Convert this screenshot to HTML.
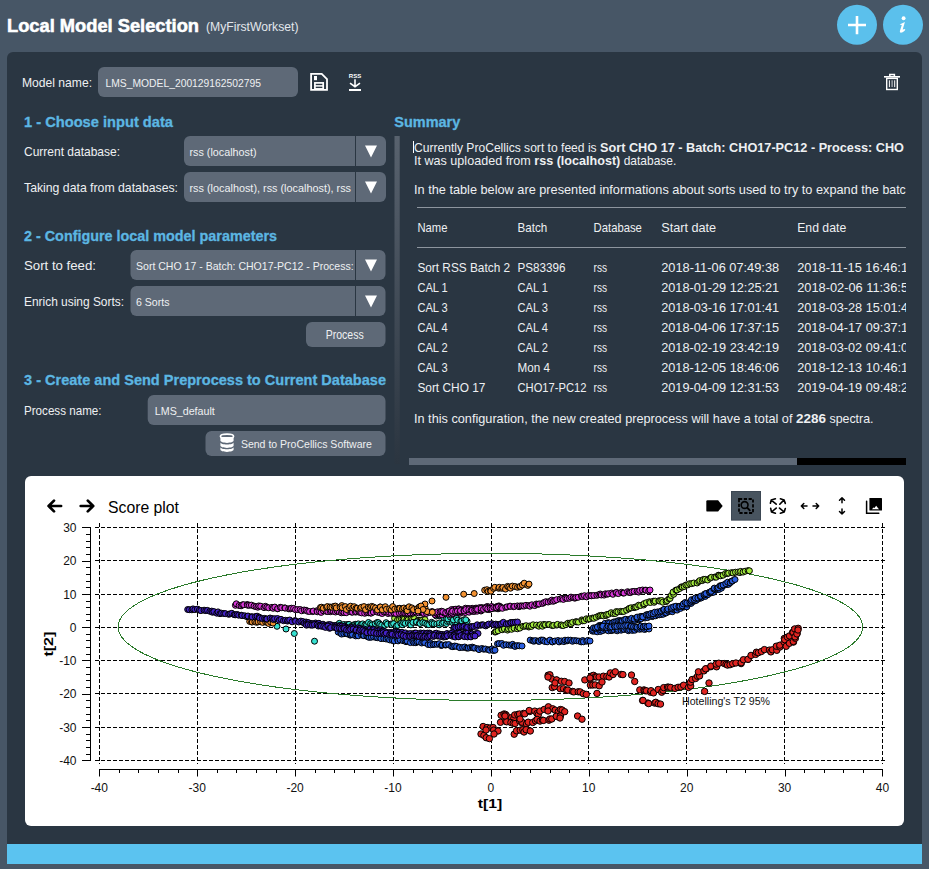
<!DOCTYPE html>
<html><head><meta charset="utf-8">
<style>
html,body{margin:0;padding:0;background:#475666;width:929px;height:869px;overflow:hidden}
svg{display:block}
text{font-family:"Liberation Sans",sans-serif;white-space:pre}
</style></head>
<body>
<svg width="929" height="869" viewBox="0 0 929 869">
<defs>
<linearGradient id="sb" x1="0" y1="0" x2="0" y2="1">
<stop offset="0" stop-color="#58626e"/><stop offset="1" stop-color="#2b3540"/>
</linearGradient>
<clipPath id="sumclip"><rect x="400" y="130" width="506" height="330"/></clipPath>
<clipPath id="dd1"><rect x="184" y="136" width="171" height="66"/></clipPath>
<clipPath id="dd2"><rect x="130" y="250" width="225" height="66"/></clipPath>
<clipPath id="plotclip"><rect x="25" y="476" width="879" height="350" rx="6"/></clipPath>
</defs>

<text x="7" y="31.7" font-size="18.5" fill="#fff" font-weight="bold" textLength="192" lengthAdjust="spacingAndGlyphs" stroke="#fff" stroke-width="0.55">Local Model Selection</text>
<text x="206" y="30.5" font-size="12.5" fill="#e3e7ec" textLength="92.5" lengthAdjust="spacingAndGlyphs">(MyFirstWorkset)</text>
<circle cx="857" cy="24.8" r="20" fill="#5bc0ec"/>
<circle cx="903" cy="24.8" r="20" fill="#5bc0ec"/>
<path d="M857 16v18.2M848 25h18" stroke="#fff" stroke-width="2.6"/>
<circle cx="903.6" cy="18.3" r="1.95" fill="#fff"/>
<path d="M899.6 24.4L904.9 21.9L902.7 29.4L905.3 29L904.7 30.7Q902.2 32.9 900.7 32.7Q899.5 32.4 899.9 31L901.8 25z" fill="#fff"/>
<rect x="7" y="52" width="915" height="800" rx="6" fill="#2a3642"/>
<rect x="7" y="844" width="915" height="20" fill="#5bc3f0"/>
<text x="22" y="87.3" font-size="13" fill="#eef0f2" textLength="70" lengthAdjust="spacingAndGlyphs">Model name:</text>
<rect x="98" y="67" width="200" height="30" rx="6" fill="#5e6977"/>
<text x="105.5" y="87.2" font-size="11.3" fill="#eef0f2" textLength="155.5" lengthAdjust="spacingAndGlyphs">LMS_MODEL_200129162502795</text>
<path d="M311.1 73.9h10.6l5.3 5.3v10.7h-15.9z" fill="none" stroke="#fff" stroke-width="1.8" stroke-linejoin="miter"/>
<rect x="314" y="76" width="3" height="4.2" fill="#fff"/>
<rect x="314.9" y="82.9" width="8.3" height="6" fill="none" stroke="#fff" stroke-width="1.7"/>
<path d="M314.9 85.9h8.3" stroke="#fff" stroke-width="1.5"/>
<text x="355" y="78" font-size="6" font-weight="bold" fill="#fff" text-anchor="middle" textLength="12.4" lengthAdjust="spacingAndGlyphs">RSS</text>
<path d="M355 79.2v7M350 83.1l5 3.6 5-3.6" fill="none" stroke="#fff" stroke-width="1.6"/>
<rect x="349" y="89" width="12" height="2" fill="#fff"/>
<rect x="884" y="76" width="16" height="1.6" fill="#fff"/>
<path d="M889.8 76v-1.5h4.6v1.5" fill="none" stroke="#fff" stroke-width="1.5"/>
<rect x="886.7" y="78.4" width="10.6" height="11.1" fill="none" stroke="#fff" stroke-width="1.4"/>
<path d="M889.4 80.3v6.8M894.7 80.3v6.8" stroke="#fff" stroke-width="1"/><path d="M892.1 80.3v6.8" stroke="#b8bcc2" stroke-width="1.2"/>
<text x="24" y="126.9" font-size="14.8" fill="#5cb6e2" font-weight="bold" textLength="149" lengthAdjust="spacingAndGlyphs" stroke="#5cb6e2" stroke-width="0.3">1 - Choose input data</text>
<text x="24" y="156" font-size="13" fill="#eef0f2" textLength="96" lengthAdjust="spacingAndGlyphs">Current database:</text>
<text x="24" y="192" font-size="13" fill="#eef0f2" textLength="154" lengthAdjust="spacingAndGlyphs">Taking data from databases:</text>
<rect x="184" y="136" width="202" height="30" rx="6" fill="#5e6977"/>
<rect x="184" y="172" width="202" height="30" rx="6" fill="#5e6977"/>
<path d="M355.5 136v30M355.5 172v30" stroke="#2a3642" stroke-width="1"/>
<text x="189.5" y="156" font-size="11.6" fill="#eef0f2" textLength="67" lengthAdjust="spacingAndGlyphs">rss (localhost)</text>
<g clip-path="url(#dd1)">
<text x="189.5" y="192" font-size="11.6" fill="#eef0f2" textLength="161.5" lengthAdjust="spacingAndGlyphs">rss (localhost), rss (localhost), rss</text>
</g>
<path d="M365 145.5h12l-6 12z" fill="#fff"/>
<path d="M365 181.5h12l-6 12z" fill="#fff"/>
<text x="24" y="241" font-size="14.8" fill="#5cb6e2" font-weight="bold" textLength="253" lengthAdjust="spacingAndGlyphs" stroke="#5cb6e2" stroke-width="0.3">2 - Configure local model parameters</text>
<text x="24" y="269.5" font-size="13" fill="#eef0f2" textLength="72" lengthAdjust="spacingAndGlyphs">Sort to feed:</text>
<text x="24" y="306" font-size="13" fill="#eef0f2" textLength="100" lengthAdjust="spacingAndGlyphs">Enrich using Sorts:</text>
<rect x="130.5" y="250" width="255" height="30" rx="6" fill="#5e6977"/>
<rect x="130.5" y="286" width="255" height="30" rx="6" fill="#5e6977"/>
<path d="M355.5 250v30M355.5 286v30" stroke="#2a3642" stroke-width="1"/>
<g clip-path="url(#dd2)">
<text x="136" y="269.5" font-size="11.6" fill="#eef0f2" textLength="244" lengthAdjust="spacingAndGlyphs">Sort CHO 17 - Batch: CHO17-PC12 - Process: CHO</text>
</g>
<text x="136" y="306" font-size="11.6" fill="#eef0f2" textLength="33.5" lengthAdjust="spacingAndGlyphs">6 Sorts</text>
<path d="M365 259.5h12l-6 12z" fill="#fff"/>
<path d="M365 295.5h12l-6 12z" fill="#fff"/>
<rect x="306" y="322" width="79.5" height="25" rx="6" fill="#5e6977"/>
<text x="325.7" y="339.2" font-size="12.2" fill="#eef0f2" textLength="38" lengthAdjust="spacingAndGlyphs">Process</text>
<text x="24" y="385.2" font-size="14.8" fill="#5cb6e2" font-weight="bold" textLength="362" lengthAdjust="spacingAndGlyphs" stroke="#5cb6e2" stroke-width="0.3">3 - Create and Send Preprocess to Current Database</text>
<text x="24" y="414.6" font-size="13" fill="#eef0f2" textLength="77.5" lengthAdjust="spacingAndGlyphs">Process name:</text>
<rect x="147.7" y="395" width="237.8" height="30" rx="6" fill="#5e6977"/>
<text x="154.8" y="414.6" font-size="11.6" fill="#eef0f2" textLength="60" lengthAdjust="spacingAndGlyphs">LMS_default</text>
<rect x="205.5" y="431" width="180" height="25" rx="6" fill="#5e6977"/>
<ellipse cx="227" cy="436.3" rx="6.6" ry="2.2" fill="none" stroke="#fff" stroke-width="1.6"/>
<path d="M220.4 437v3.6c0 1.3 3 2.3 6.6 2.3s6.6-1 6.6-2.3V437" fill="#fff"/>
<path d="M220.4 442.2v3.4c0 1.3 3 2.3 6.6 2.3s6.6-1 6.6-2.3v-3.4c0 1.3-3 2.3-6.6 2.3s-6.6-1-6.6-2.3z" fill="#fff"/>
<path d="M220.4 447v2.6c0 1.3 3 2.3 6.6 2.3s6.6-1 6.6-2.3V447c0 1.3-3 2.3-6.6 2.3s-6.6-1-6.6-2.3z" fill="#fff"/>
<text x="240.9" y="447.8" font-size="11.6" fill="#eef0f2" textLength="131" lengthAdjust="spacingAndGlyphs">Send to ProCellics Software</text>
<text x="394.3" y="127.4" font-size="14.8" fill="#5cb6e2" font-weight="bold" textLength="66" lengthAdjust="spacingAndGlyphs" stroke="#5cb6e2" stroke-width="0.3">Summary</text>
<rect x="394.5" y="136" width="5.2" height="328" fill="url(#sb)"/>
<path d="M413.5 141v12" stroke="#fff" stroke-width="1"/>
<g clip-path="url(#sumclip)">
<text x="414" y="152" font-size="12.8" fill="#eef0f2" textLength="186" lengthAdjust="spacingAndGlyphs">Currently ProCellics sort to feed is </text>
<text x="600" y="152" font-size="12.8" fill="#eef0f2" font-weight="bold" textLength="304" lengthAdjust="spacingAndGlyphs">Sort CHO 17 - Batch: CHO17-PC12 - Process: CHO</text>
<text x="904" y="152" font-size="12.8" fill="#eef0f2" font-weight="bold"> 17</text>
<text x="414" y="165.3" font-size="12.8" fill="#eef0f2" textLength="120.3" lengthAdjust="spacingAndGlyphs">It was uploaded from </text>
<text x="534.3" y="165.3" font-size="12.8" fill="#eef0f2" font-weight="bold" textLength="86" lengthAdjust="spacingAndGlyphs">rss (localhost)</text>
<text x="620.3" y="165.3" font-size="12.8" fill="#eef0f2" textLength="56" lengthAdjust="spacingAndGlyphs"> database.</text>
<text x="414" y="193.5" font-size="12.8" fill="#eef0f2" textLength="468.5" lengthAdjust="spacingAndGlyphs">In the table below are presented informations about sorts used to try to expand the </text>
<text x="882.5" y="193.5" font-size="12.8" fill="#eef0f2" textLength="30" lengthAdjust="spacingAndGlyphs">batch</text>
<path d="M417 207.5h489M417 247.5h489" stroke="#8d959e" stroke-width="1"/>
<text x="417.4" y="231.8" font-size="12.8" fill="#eef0f2" textLength="30" lengthAdjust="spacingAndGlyphs">Name</text>
<text x="517.5" y="231.8" font-size="12.8" fill="#eef0f2" textLength="29.7" lengthAdjust="spacingAndGlyphs">Batch</text>
<text x="593.6" y="231.8" font-size="12.8" fill="#eef0f2" textLength="48.3" lengthAdjust="spacingAndGlyphs">Database</text>
<text x="661.2" y="231.8" font-size="12.8" fill="#eef0f2" textLength="55" lengthAdjust="spacingAndGlyphs">Start date</text>
<text x="797.2" y="231.8" font-size="12.8" fill="#eef0f2" textLength="49" lengthAdjust="spacingAndGlyphs">End date</text>
<text x="417.4" y="271.7" font-size="12.8" fill="#eef0f2" textLength="92.7" lengthAdjust="spacingAndGlyphs">Sort RSS Batch 2</text>
<text x="517.5" y="271.7" font-size="12.8" fill="#eef0f2" textLength="48" lengthAdjust="spacingAndGlyphs">PS83396</text>
<text x="593.6" y="271.7" font-size="12.8" fill="#eef0f2" textLength="13.5" lengthAdjust="spacingAndGlyphs">rss</text>
<text x="661.2" y="271.7" font-size="12.8" fill="#eef0f2" textLength="118" lengthAdjust="spacingAndGlyphs">2018-11-06 07:49:38</text>
<text x="797.2" y="271.7" font-size="12.8" fill="#eef0f2" textLength="118" lengthAdjust="spacingAndGlyphs">2018-11-15 16:46:10</text>
<text x="417.4" y="291.7" font-size="12.8" fill="#eef0f2" textLength="30.4" lengthAdjust="spacingAndGlyphs">CAL 1</text>
<text x="517.5" y="291.7" font-size="12.8" fill="#eef0f2" textLength="30.4" lengthAdjust="spacingAndGlyphs">CAL 1</text>
<text x="593.6" y="291.7" font-size="12.8" fill="#eef0f2" textLength="13.5" lengthAdjust="spacingAndGlyphs">rss</text>
<text x="661.2" y="291.7" font-size="12.8" fill="#eef0f2" textLength="118" lengthAdjust="spacingAndGlyphs">2018-01-29 12:25:21</text>
<text x="797.2" y="291.7" font-size="12.8" fill="#eef0f2" textLength="118" lengthAdjust="spacingAndGlyphs">2018-02-06 11:36:55</text>
<text x="417.4" y="311.7" font-size="12.8" fill="#eef0f2" textLength="30.4" lengthAdjust="spacingAndGlyphs">CAL 3</text>
<text x="517.5" y="311.7" font-size="12.8" fill="#eef0f2" textLength="30.4" lengthAdjust="spacingAndGlyphs">CAL 3</text>
<text x="593.6" y="311.7" font-size="12.8" fill="#eef0f2" textLength="13.5" lengthAdjust="spacingAndGlyphs">rss</text>
<text x="661.2" y="311.7" font-size="12.8" fill="#eef0f2" textLength="118" lengthAdjust="spacingAndGlyphs">2018-03-16 17:01:41</text>
<text x="797.2" y="311.7" font-size="12.8" fill="#eef0f2" textLength="118" lengthAdjust="spacingAndGlyphs">2018-03-28 15:01:41</text>
<text x="417.4" y="331.7" font-size="12.8" fill="#eef0f2" textLength="30.4" lengthAdjust="spacingAndGlyphs">CAL 4</text>
<text x="517.5" y="331.7" font-size="12.8" fill="#eef0f2" textLength="30.4" lengthAdjust="spacingAndGlyphs">CAL 4</text>
<text x="593.6" y="331.7" font-size="12.8" fill="#eef0f2" textLength="13.5" lengthAdjust="spacingAndGlyphs">rss</text>
<text x="661.2" y="331.7" font-size="12.8" fill="#eef0f2" textLength="118" lengthAdjust="spacingAndGlyphs">2018-04-06 17:37:15</text>
<text x="797.2" y="331.7" font-size="12.8" fill="#eef0f2" textLength="118" lengthAdjust="spacingAndGlyphs">2018-04-17 09:37:15</text>
<text x="417.4" y="351.7" font-size="12.8" fill="#eef0f2" textLength="30.4" lengthAdjust="spacingAndGlyphs">CAL 2</text>
<text x="517.5" y="351.7" font-size="12.8" fill="#eef0f2" textLength="30.4" lengthAdjust="spacingAndGlyphs">CAL 2</text>
<text x="593.6" y="351.7" font-size="12.8" fill="#eef0f2" textLength="13.5" lengthAdjust="spacingAndGlyphs">rss</text>
<text x="661.2" y="351.7" font-size="12.8" fill="#eef0f2" textLength="118" lengthAdjust="spacingAndGlyphs">2018-02-19 23:42:19</text>
<text x="797.2" y="351.7" font-size="12.8" fill="#eef0f2" textLength="118" lengthAdjust="spacingAndGlyphs">2018-03-02 09:41:00</text>
<text x="417.4" y="371.7" font-size="12.8" fill="#eef0f2" textLength="30.4" lengthAdjust="spacingAndGlyphs">CAL 3</text>
<text x="517.5" y="371.7" font-size="12.8" fill="#eef0f2" textLength="32.4" lengthAdjust="spacingAndGlyphs">Mon 4</text>
<text x="593.6" y="371.7" font-size="12.8" fill="#eef0f2" textLength="13.5" lengthAdjust="spacingAndGlyphs">rss</text>
<text x="661.2" y="371.7" font-size="12.8" fill="#eef0f2" textLength="118" lengthAdjust="spacingAndGlyphs">2018-12-05 18:46:06</text>
<text x="797.2" y="371.7" font-size="12.8" fill="#eef0f2" textLength="118" lengthAdjust="spacingAndGlyphs">2018-12-13 10:46:15</text>
<text x="417.4" y="391.7" font-size="12.8" fill="#eef0f2" textLength="68" lengthAdjust="spacingAndGlyphs">Sort CHO 17</text>
<text x="517.5" y="391.7" font-size="12.8" fill="#eef0f2" textLength="69" lengthAdjust="spacingAndGlyphs">CHO17-PC12</text>
<text x="593.6" y="391.7" font-size="12.8" fill="#eef0f2" textLength="13.5" lengthAdjust="spacingAndGlyphs">rss</text>
<text x="661.2" y="391.7" font-size="12.8" fill="#eef0f2" textLength="118" lengthAdjust="spacingAndGlyphs">2019-04-09 12:31:53</text>
<text x="797.2" y="391.7" font-size="12.8" fill="#eef0f2" textLength="118" lengthAdjust="spacingAndGlyphs">2019-04-19 09:48:22</text>
<text x="414" y="422.7" font-size="12.8" fill="#eef0f2" textLength="382" lengthAdjust="spacingAndGlyphs">In this configuration, the new created preprocess will have a total of </text>
<text x="796" y="422.7" font-size="12.8" fill="#eef0f2" font-weight="bold" textLength="30" lengthAdjust="spacingAndGlyphs">2286</text>
<text x="826" y="422.7" font-size="12.8" fill="#eef0f2" textLength="47.5" lengthAdjust="spacingAndGlyphs"> spectra.</text>
</g>
<rect x="409" y="458" width="388" height="7" fill="#5e6977"/>
<rect x="797" y="458" width="109" height="7" fill="#000"/>
<rect x="25" y="476" width="879" height="350" rx="6" fill="#fff"/>
<line x1="99.5" y1="523" x2="99.5" y2="764" stroke="#000" stroke-width="1" stroke-dasharray="4 2" shape-rendering="crispEdges"/>
<line x1="197.5" y1="523" x2="197.5" y2="764" stroke="#000" stroke-width="1" stroke-dasharray="4 2" shape-rendering="crispEdges"/>
<line x1="295.5" y1="523" x2="295.5" y2="764" stroke="#000" stroke-width="1" stroke-dasharray="4 2" shape-rendering="crispEdges"/>
<line x1="393.5" y1="523" x2="393.5" y2="764" stroke="#000" stroke-width="1" stroke-dasharray="4 2" shape-rendering="crispEdges"/>
<line x1="491.5" y1="523" x2="491.5" y2="764" stroke="#000" stroke-width="1" stroke-dasharray="4 2" shape-rendering="crispEdges"/>
<line x1="588.5" y1="523" x2="588.5" y2="764" stroke="#000" stroke-width="1" stroke-dasharray="4 2" shape-rendering="crispEdges"/>
<line x1="686.5" y1="523" x2="686.5" y2="764" stroke="#000" stroke-width="1" stroke-dasharray="4 2" shape-rendering="crispEdges"/>
<line x1="784.5" y1="523" x2="784.5" y2="764" stroke="#000" stroke-width="1" stroke-dasharray="4 2" shape-rendering="crispEdges"/>
<line x1="882.5" y1="523" x2="882.5" y2="764" stroke="#000" stroke-width="1" stroke-dasharray="4 2" shape-rendering="crispEdges"/>
<line x1="95" y1="527.5" x2="886" y2="527.5" stroke="#000" stroke-width="1" stroke-dasharray="4 2" shape-rendering="crispEdges"/>
<line x1="95" y1="560.5" x2="886" y2="560.5" stroke="#000" stroke-width="1" stroke-dasharray="4 2" shape-rendering="crispEdges"/>
<line x1="95" y1="594.5" x2="886" y2="594.5" stroke="#000" stroke-width="1" stroke-dasharray="4 2" shape-rendering="crispEdges"/>
<line x1="95" y1="627.5" x2="886" y2="627.5" stroke="#000" stroke-width="1" stroke-dasharray="4 2" shape-rendering="crispEdges"/>
<line x1="95" y1="660.5" x2="886" y2="660.5" stroke="#000" stroke-width="1" stroke-dasharray="4 2" shape-rendering="crispEdges"/>
<line x1="95" y1="693.5" x2="886" y2="693.5" stroke="#000" stroke-width="1" stroke-dasharray="4 2" shape-rendering="crispEdges"/>
<line x1="95" y1="727.5" x2="886" y2="727.5" stroke="#000" stroke-width="1" stroke-dasharray="4 2" shape-rendering="crispEdges"/>
<line x1="95" y1="760.5" x2="886" y2="760.5" stroke="#000" stroke-width="1" stroke-dasharray="4 2" shape-rendering="crispEdges"/>
<g stroke="#000" stroke-width="1">
<line x1="90.5" y1="527" x2="90.5" y2="761"/>
<line x1="99" y1="769.5" x2="883" y2="769.5"/>
<path d="M82 527.5h8.5M86 534.5h4.5M86 541.5h4.5M86 547.5h4.5M86 554.5h4.5M82 561.5h8.5M86 567.5h4.5M86 574.5h4.5M86 581.5h4.5M86 587.5h4.5M82 594.5h8.5M86 601.5h4.5M86 607.5h4.5M86 614.5h4.5M86 620.5h4.5M82 627.5h8.5M86 634.5h4.5M86 640.5h4.5M86 647.5h4.5M86 654.5h4.5M82 660.5h8.5M86 667.5h4.5M86 674.5h4.5M86 680.5h4.5M86 687.5h4.5M82 694.5h8.5M86 700.5h4.5M86 707.5h4.5M86 714.5h4.5M86 720.5h4.5M82 727.5h8.5M86 734.5h4.5M86 740.5h4.5M86 747.5h4.5M86 754.5h4.5M82 760.5h8.5M99.5 769v7.5M119.5 769v4M138.5 769v4M158.5 769v4M178.5 769v4M197.5 769v7.5M217.5 769v4M236.5 769v4M256.5 769v4M276.5 769v4M295.5 769v7.5M315.5 769v4M334.5 769v4M354.5 769v4M373.5 769v4M393.5 769v7.5M413.5 769v4M432.5 769v4M452.5 769v4M471.5 769v4M491.5 769v7.5M510.5 769v4M530.5 769v4M550.5 769v4M569.5 769v4M589.5 769v7.5M608.5 769v4M628.5 769v4M648.5 769v4M667.5 769v4M687.5 769v7.5M706.5 769v4M726.5 769v4M745.5 769v4M765.5 769v4M785.5 769v7.5M804.5 769v4M824.5 769v4M843.5 769v4M863.5 769v4M882.5 769v7.5" fill="none"/>
</g>
<text x="76.5" y="531.9" font-size="12" text-anchor="end" fill="#111">30</text>
<text x="76.5" y="565.2" font-size="12" text-anchor="end" fill="#111">20</text>
<text x="76.5" y="598.5" font-size="12" text-anchor="end" fill="#111">10</text>
<text x="76.5" y="631.8" font-size="12" text-anchor="end" fill="#111">0</text>
<text x="76.5" y="665.1" font-size="12" text-anchor="end" fill="#111">-10</text>
<text x="76.5" y="698.4" font-size="12" text-anchor="end" fill="#111">-20</text>
<text x="76.5" y="731.6" font-size="12" text-anchor="end" fill="#111">-30</text>
<text x="76.5" y="764.9" font-size="12" text-anchor="end" fill="#111">-40</text>
<text x="99.3" y="792" font-size="12" text-anchor="middle" fill="#111">-40</text>
<text x="197.2" y="792" font-size="12" text-anchor="middle" fill="#111">-30</text>
<text x="295.1" y="792" font-size="12" text-anchor="middle" fill="#111">-20</text>
<text x="393.0" y="792" font-size="12" text-anchor="middle" fill="#111">-10</text>
<text x="490.9" y="792" font-size="12" text-anchor="middle" fill="#111">0</text>
<text x="588.8" y="792" font-size="12" text-anchor="middle" fill="#111">10</text>
<text x="686.7" y="792" font-size="12" text-anchor="middle" fill="#111">20</text>
<text x="784.6" y="792" font-size="12" text-anchor="middle" fill="#111">30</text>
<text x="882.5" y="792" font-size="12" text-anchor="middle" fill="#111">40</text>
<text x="477.7" y="807.8" font-size="13" font-weight="bold" fill="#000" textLength="24.5" lengthAdjust="spacingAndGlyphs">t[1]</text>
<text transform="translate(53 656.6) rotate(-90)" x="0" y="0" font-size="13" font-weight="bold" fill="#000" textLength="25" lengthAdjust="spacingAndGlyphs">t[2]</text>
<ellipse cx="490.4" cy="626.9" rx="372.2" ry="73.6" fill="none" stroke="#2a7a2a" stroke-width="1" shape-rendering="crispEdges"/>
<g fill="#e02420" stroke="#000" stroke-width="1.0">
<circle cx="639.8" cy="689.9" r="3.2"/>
<circle cx="644.0" cy="689.9" r="3.2"/>
<circle cx="645.0" cy="690.7" r="3.2"/>
<circle cx="646.4" cy="690.8" r="3.2"/>
<circle cx="650.5" cy="692.2" r="3.2"/>
<circle cx="651.0" cy="690.7" r="3.2"/>
<circle cx="653.5" cy="692.9" r="3.2"/>
<circle cx="658.2" cy="689.5" r="3.2"/>
<circle cx="661.7" cy="692.2" r="3.2"/>
<circle cx="663.0" cy="690.4" r="3.2"/>
<circle cx="663.7" cy="687.6" r="3.2"/>
<circle cx="667.5" cy="687.1" r="3.2"/>
<circle cx="668.7" cy="687.2" r="3.2"/>
<circle cx="670.6" cy="687.4" r="3.2"/>
<circle cx="675.0" cy="688.4" r="3.2"/>
<circle cx="678.1" cy="687.3" r="3.2"/>
<circle cx="680.9" cy="687.0" r="3.2"/>
<circle cx="683.6" cy="685.2" r="3.2"/>
<circle cx="688.4" cy="687.5" r="3.2"/>
<circle cx="690.7" cy="686.0" r="3.2"/>
<circle cx="690.5" cy="682.2" r="3.2"/>
<circle cx="692.1" cy="679.5" r="3.2"/>
<circle cx="695.6" cy="678.5" r="3.2"/>
<circle cx="697.5" cy="676.3" r="3.2"/>
<circle cx="699.6" cy="675.9" r="3.2"/>
<circle cx="698.4" cy="671.8" r="3.2"/>
<circle cx="703.9" cy="670.9" r="3.2"/>
<circle cx="706.3" cy="668.8" r="3.2"/>
<circle cx="705.6" cy="668.8" r="3.2"/>
<circle cx="710.8" cy="666.7" r="3.2"/>
<circle cx="710.9" cy="666.1" r="3.2"/>
<circle cx="716.6" cy="666.8" r="3.2"/>
<circle cx="716.1" cy="664.1" r="3.2"/>
<circle cx="718.8" cy="663.2" r="3.2"/>
<circle cx="724.1" cy="663.5" r="3.2"/>
<circle cx="726.0" cy="664.3" r="3.2"/>
<circle cx="727.5" cy="665.1" r="3.2"/>
<circle cx="730.0" cy="664.7" r="3.2"/>
<circle cx="732.7" cy="663.7" r="3.2"/>
<circle cx="735.9" cy="663.0" r="3.2"/>
<circle cx="741.1" cy="663.6" r="3.2"/>
<circle cx="741.2" cy="662.7" r="3.2"/>
<circle cx="743.4" cy="659.7" r="3.2"/>
<circle cx="748.2" cy="659.3" r="3.2"/>
<circle cx="748.0" cy="659.3" r="3.2"/>
<circle cx="751.0" cy="655.4" r="3.2"/>
<circle cx="755.6" cy="654.4" r="3.2"/>
<circle cx="756.4" cy="652.2" r="3.2"/>
<circle cx="758.3" cy="652.7" r="3.2"/>
<circle cx="761.4" cy="651.5" r="3.2"/>
<circle cx="764.4" cy="649.6" r="3.2"/>
<circle cx="769.4" cy="650.1" r="3.2"/>
<circle cx="770.9" cy="651.9" r="3.2"/>
<circle cx="772.4" cy="649.8" r="3.2"/>
<circle cx="776.8" cy="650.3" r="3.2"/>
<circle cx="776.3" cy="646.2" r="3.2"/>
<circle cx="779.9" cy="647.0" r="3.2"/>
<circle cx="779.8" cy="645.2" r="3.2"/>
<circle cx="784.1" cy="642.1" r="3.2"/>
<circle cx="784.3" cy="638.4" r="3.2"/>
<circle cx="784.7" cy="639.7" r="3.2"/>
<circle cx="787.4" cy="637.1" r="3.2"/>
<circle cx="789.5" cy="635.9" r="3.2"/>
<circle cx="792.6" cy="632.4" r="3.2"/>
<circle cx="793.1" cy="632.3" r="3.2"/>
<circle cx="794.7" cy="628.9" r="3.2"/>
<circle cx="798.2" cy="628.3" r="3.2"/>
<circle cx="786.2" cy="646.3" r="3.2"/>
<circle cx="789.4" cy="643.3" r="3.2"/>
<circle cx="793.5" cy="642.1" r="3.2"/>
<circle cx="793.3" cy="641.5" r="3.2"/>
<circle cx="795.4" cy="638.3" r="3.2"/>
<circle cx="795.0" cy="636.9" r="3.2"/>
<circle cx="797.1" cy="633.6" r="3.2"/>
<circle cx="796.9" cy="633.9" r="3.2"/>
<circle cx="798.0" cy="630.0" r="3.2"/>
<circle cx="548.1" cy="675.2" r="3.2"/>
<circle cx="549.5" cy="675.9" r="3.2"/>
<circle cx="549.9" cy="674.8" r="3.2"/>
<circle cx="551.8" cy="679.0" r="3.2"/>
<circle cx="556.6" cy="680.1" r="3.2"/>
<circle cx="556.6" cy="679.9" r="3.2"/>
<circle cx="561.4" cy="681.3" r="3.2"/>
<circle cx="564.7" cy="681.5" r="3.2"/>
<circle cx="552.2" cy="687.6" r="3.2"/>
<circle cx="554.6" cy="686.7" r="3.2"/>
<circle cx="560.2" cy="688.7" r="3.2"/>
<circle cx="563.5" cy="688.7" r="3.2"/>
<circle cx="566.5" cy="690.2" r="3.2"/>
<circle cx="567.8" cy="690.1" r="3.2"/>
<circle cx="572.6" cy="691.4" r="3.2"/>
<circle cx="573.8" cy="691.9" r="3.2"/>
<circle cx="578.2" cy="691.8" r="3.2"/>
<circle cx="580.2" cy="691.9" r="3.2"/>
<circle cx="583.3" cy="693.7" r="3.2"/>
<circle cx="586.3" cy="694.4" r="3.2"/>
<circle cx="584.8" cy="679.9" r="3.2"/>
<circle cx="590.2" cy="679.3" r="3.2"/>
<circle cx="591.4" cy="676.1" r="3.2"/>
<circle cx="593.5" cy="675.3" r="3.2"/>
<circle cx="595.2" cy="676.8" r="3.2"/>
<circle cx="596.6" cy="677.0" r="3.2"/>
<circle cx="599.1" cy="677.0" r="3.2"/>
<circle cx="603.4" cy="676.2" r="3.2"/>
<circle cx="606.8" cy="676.4" r="3.2"/>
<circle cx="609.1" cy="677.0" r="3.2"/>
<circle cx="610.4" cy="672.9" r="3.2"/>
<circle cx="613.1" cy="674.5" r="3.2"/>
<circle cx="615.3" cy="671.8" r="3.2"/>
<circle cx="621.1" cy="674.4" r="3.2"/>
<circle cx="622.9" cy="674.6" r="3.2"/>
<circle cx="590.4" cy="685.1" r="3.2"/>
<circle cx="592.8" cy="685.0" r="3.2"/>
<circle cx="595.2" cy="684.9" r="3.2"/>
<circle cx="599.2" cy="685.8" r="3.2"/>
<circle cx="501.1" cy="715.3" r="3.2"/>
<circle cx="504.0" cy="714.0" r="3.2"/>
<circle cx="505.5" cy="714.4" r="3.2"/>
<circle cx="506.5" cy="715.7" r="3.2"/>
<circle cx="511.6" cy="717.6" r="3.2"/>
<circle cx="513.8" cy="718.6" r="3.2"/>
<circle cx="514.7" cy="714.9" r="3.2"/>
<circle cx="517.8" cy="714.4" r="3.2"/>
<circle cx="519.5" cy="714.0" r="3.2"/>
<circle cx="523.5" cy="713.4" r="3.2"/>
<circle cx="524.8" cy="713.8" r="3.2"/>
<circle cx="529.7" cy="711.5" r="3.2"/>
<circle cx="529.2" cy="710.5" r="3.2"/>
<circle cx="534.8" cy="711.1" r="3.2"/>
<circle cx="537.0" cy="713.5" r="3.2"/>
<circle cx="538.3" cy="714.8" r="3.2"/>
<circle cx="539.9" cy="711.1" r="3.2"/>
<circle cx="544.2" cy="709.4" r="3.2"/>
<circle cx="548.2" cy="708.8" r="3.2"/>
<circle cx="548.4" cy="706.8" r="3.2"/>
<circle cx="552.7" cy="708.8" r="3.2"/>
<circle cx="555.2" cy="710.1" r="3.2"/>
<circle cx="558.3" cy="711.7" r="3.2"/>
<circle cx="560.4" cy="709.5" r="3.2"/>
<circle cx="562.1" cy="710.0" r="3.2"/>
<circle cx="564.7" cy="711.7" r="3.2"/>
<circle cx="500.5" cy="722.3" r="3.2"/>
<circle cx="505.7" cy="721.2" r="3.2"/>
<circle cx="506.7" cy="721.8" r="3.2"/>
<circle cx="510.9" cy="722.5" r="3.2"/>
<circle cx="513.2" cy="723.3" r="3.2"/>
<circle cx="515.1" cy="723.5" r="3.2"/>
<circle cx="519.6" cy="720.9" r="3.2"/>
<circle cx="522.3" cy="723.2" r="3.2"/>
<circle cx="522.0" cy="722.2" r="3.2"/>
<circle cx="526.5" cy="723.9" r="3.2"/>
<circle cx="528.2" cy="722.2" r="3.2"/>
<circle cx="532.7" cy="722.5" r="3.2"/>
<circle cx="535.5" cy="720.8" r="3.2"/>
<circle cx="537.1" cy="719.4" r="3.2"/>
<circle cx="540.0" cy="721.1" r="3.2"/>
<circle cx="542.4" cy="720.2" r="3.2"/>
<circle cx="543.5" cy="720.4" r="3.2"/>
<circle cx="548.9" cy="720.2" r="3.2"/>
<circle cx="549.9" cy="719.0" r="3.2"/>
<circle cx="551.8" cy="719.0" r="3.2"/>
<circle cx="556.4" cy="716.4" r="3.2"/>
<circle cx="556.3" cy="716.3" r="3.2"/>
<circle cx="560.4" cy="716.0" r="3.2"/>
<circle cx="514.2" cy="734.2" r="3.2"/>
<circle cx="516.5" cy="730.8" r="3.2"/>
<circle cx="520.2" cy="730.2" r="3.2"/>
<circle cx="522.8" cy="729.8" r="3.2"/>
<circle cx="524.0" cy="732.0" r="3.2"/>
<circle cx="526.1" cy="729.7" r="3.2"/>
<circle cx="530.3" cy="731.0" r="3.2"/>
<circle cx="483.1" cy="726.5" r="3.2"/>
<circle cx="487.1" cy="727.5" r="3.2"/>
<circle cx="490.3" cy="727.9" r="3.2"/>
<circle cx="493.1" cy="727.5" r="3.2"/>
<circle cx="493.7" cy="730.1" r="3.2"/>
<circle cx="498.0" cy="731.0" r="3.2"/>
<circle cx="481.0" cy="734.0" r="3.2"/>
<circle cx="483.9" cy="735.4" r="3.2"/>
<circle cx="486.2" cy="737.7" r="3.2"/>
<circle cx="489.4" cy="738.6" r="3.2"/>
<circle cx="642.6" cy="700.5" r="3.2"/>
<circle cx="647.8" cy="703.0" r="3.2"/>
<circle cx="648.7" cy="703.6" r="3.2"/>
<circle cx="654.7" cy="703.1" r="3.2"/>
<circle cx="655.8" cy="702.3" r="3.2"/>
<circle cx="658.1" cy="703.7" r="3.2"/>
<circle cx="660.5" cy="704.1" r="3.2"/>
<circle cx="631.5" cy="675.0" r="3.2"/>
<circle cx="634.7" cy="681.5" r="3.2"/>
<circle cx="597.0" cy="693.4" r="3.2"/>
<circle cx="577.6" cy="716.0" r="3.2"/>
<circle cx="582.0" cy="719.2" r="3.2"/>
<circle cx="704.6" cy="691.4" r="3.2"/>
<circle cx="709.0" cy="683.0" r="3.2"/>
<circle cx="643.0" cy="700.4" r="3.2"/>
<circle cx="505.0" cy="716.0" r="3.2"/>
<circle cx="520.0" cy="719.0" r="3.2"/>
<circle cx="548.0" cy="711.0" r="3.2"/>
<circle cx="560.0" cy="718.0" r="3.2"/>
<circle cx="486.0" cy="730.0" r="3.2"/>
<circle cx="494.0" cy="734.0" r="3.2"/>
<circle cx="555.0" cy="683.0" r="3.2"/>
<circle cx="548.0" cy="677.0" r="3.2"/>
<circle cx="590.0" cy="678.0" r="3.2"/>
<circle cx="602.0" cy="682.0" r="3.2"/>
<circle cx="569.0" cy="683.0" r="3.2"/>
</g>
<g fill="#2a5ee0" stroke="#000" stroke-width="1.0">
<circle cx="338.2" cy="632.1" r="3.0"/>
<circle cx="340.8" cy="633.3" r="3.0"/>
<circle cx="341.6" cy="634.1" r="3.0"/>
<circle cx="343.8" cy="633.7" r="3.0"/>
<circle cx="346.0" cy="633.1" r="3.0"/>
<circle cx="347.6" cy="634.0" r="3.0"/>
<circle cx="350.3" cy="635.2" r="3.0"/>
<circle cx="350.8" cy="634.6" r="3.0"/>
<circle cx="352.4" cy="634.7" r="3.0"/>
<circle cx="355.7" cy="635.9" r="3.0"/>
<circle cx="356.9" cy="635.0" r="3.0"/>
<circle cx="358.2" cy="635.8" r="3.0"/>
<circle cx="361.6" cy="635.0" r="3.0"/>
<circle cx="363.2" cy="635.1" r="3.0"/>
<circle cx="363.9" cy="635.7" r="3.0"/>
<circle cx="366.8" cy="636.1" r="3.0"/>
<circle cx="368.0" cy="636.9" r="3.0"/>
<circle cx="369.4" cy="637.4" r="3.0"/>
<circle cx="371.4" cy="637.2" r="3.0"/>
<circle cx="373.5" cy="636.8" r="3.0"/>
<circle cx="376.0" cy="637.5" r="3.0"/>
<circle cx="377.5" cy="637.7" r="3.0"/>
<circle cx="379.7" cy="637.4" r="3.0"/>
<circle cx="381.0" cy="638.6" r="3.0"/>
<circle cx="383.8" cy="638.6" r="3.0"/>
<circle cx="386.1" cy="639.0" r="3.0"/>
<circle cx="388.0" cy="638.5" r="3.0"/>
<circle cx="389.6" cy="639.9" r="3.0"/>
<circle cx="391.9" cy="639.1" r="3.0"/>
<circle cx="392.6" cy="640.6" r="3.0"/>
<circle cx="394.3" cy="640.9" r="3.0"/>
<circle cx="397.5" cy="639.4" r="3.0"/>
<circle cx="398.1" cy="640.9" r="3.0"/>
<circle cx="400.0" cy="639.8" r="3.0"/>
<circle cx="403.1" cy="640.7" r="3.0"/>
<circle cx="404.9" cy="640.4" r="3.0"/>
<circle cx="406.0" cy="641.7" r="3.0"/>
<circle cx="407.1" cy="641.0" r="3.0"/>
<circle cx="410.4" cy="642.6" r="3.0"/>
<circle cx="412.9" cy="641.2" r="3.0"/>
<circle cx="413.9" cy="642.7" r="3.0"/>
<circle cx="415.8" cy="642.7" r="3.0"/>
<circle cx="417.1" cy="641.7" r="3.0"/>
<circle cx="418.9" cy="641.8" r="3.0"/>
<circle cx="421.7" cy="643.0" r="3.0"/>
<circle cx="423.7" cy="642.4" r="3.0"/>
<circle cx="424.8" cy="642.7" r="3.0"/>
<circle cx="428.1" cy="644.5" r="3.0"/>
<circle cx="430.2" cy="642.9" r="3.0"/>
<circle cx="430.4" cy="644.8" r="3.0"/>
<circle cx="433.1" cy="644.6" r="3.0"/>
<circle cx="434.8" cy="644.2" r="3.0"/>
<circle cx="437.1" cy="644.3" r="3.0"/>
<circle cx="439.2" cy="643.7" r="3.0"/>
<circle cx="441.3" cy="645.5" r="3.0"/>
<circle cx="442.2" cy="645.0" r="3.0"/>
<circle cx="445.3" cy="645.0" r="3.0"/>
<circle cx="446.1" cy="644.8" r="3.0"/>
<circle cx="448.7" cy="644.6" r="3.0"/>
<circle cx="451.4" cy="646.4" r="3.0"/>
<circle cx="452.9" cy="646.7" r="3.0"/>
<circle cx="454.7" cy="646.0" r="3.0"/>
<circle cx="456.6" cy="646.4" r="3.0"/>
<circle cx="459.3" cy="647.2" r="3.0"/>
<circle cx="459.7" cy="647.6" r="3.0"/>
<circle cx="462.6" cy="647.5" r="3.0"/>
<circle cx="464.7" cy="647.0" r="3.0"/>
<circle cx="466.8" cy="648.1" r="3.0"/>
<circle cx="468.3" cy="648.1" r="3.0"/>
<circle cx="470.4" cy="647.5" r="3.0"/>
<circle cx="472.3" cy="647.1" r="3.0"/>
<circle cx="473.4" cy="648.0" r="3.0"/>
<circle cx="474.7" cy="648.0" r="3.0"/>
<circle cx="477.9" cy="648.7" r="3.0"/>
<circle cx="479.0" cy="649.6" r="3.0"/>
<circle cx="481.8" cy="648.5" r="3.0"/>
<circle cx="483.7" cy="649.2" r="3.0"/>
<circle cx="485.4" cy="649.0" r="3.0"/>
<circle cx="488.3" cy="649.7" r="3.0"/>
<circle cx="489.6" cy="650.2" r="3.0"/>
<circle cx="492.1" cy="648.9" r="3.0"/>
<circle cx="493.3" cy="650.5" r="3.0"/>
<circle cx="495.0" cy="650.2" r="3.0"/>
<circle cx="497.5" cy="643.8" r="3.0"/>
<circle cx="499.1" cy="643.6" r="3.0"/>
<circle cx="501.8" cy="643.5" r="3.0"/>
<circle cx="503.5" cy="645.3" r="3.0"/>
<circle cx="506.1" cy="644.7" r="3.0"/>
<circle cx="508.9" cy="645.0" r="3.0"/>
<circle cx="511.0" cy="645.3" r="3.0"/>
<circle cx="512.6" cy="644.3" r="3.0"/>
<circle cx="514.2" cy="645.9" r="3.0"/>
<circle cx="515.1" cy="646.4" r="3.0"/>
<circle cx="517.3" cy="645.6" r="3.0"/>
<circle cx="519.3" cy="645.8" r="3.0"/>
<circle cx="522.0" cy="646.0" r="3.0"/>
<circle cx="530.2" cy="640.1" r="3.0"/>
<circle cx="532.8" cy="640.8" r="3.0"/>
<circle cx="533.9" cy="641.2" r="3.0"/>
<circle cx="535.5" cy="640.6" r="3.0"/>
<circle cx="538.1" cy="641.1" r="3.0"/>
<circle cx="539.2" cy="641.4" r="3.0"/>
<circle cx="541.2" cy="640.0" r="3.0"/>
<circle cx="543.0" cy="640.1" r="3.0"/>
<circle cx="544.8" cy="641.5" r="3.0"/>
<circle cx="547.2" cy="641.8" r="3.0"/>
<circle cx="549.9" cy="640.1" r="3.0"/>
<circle cx="552.3" cy="641.9" r="3.0"/>
<circle cx="552.4" cy="641.8" r="3.0"/>
<circle cx="555.0" cy="641.0" r="3.0"/>
<circle cx="558.0" cy="640.5" r="3.0"/>
<circle cx="559.1" cy="641.9" r="3.0"/>
<circle cx="561.4" cy="640.9" r="3.0"/>
<circle cx="563.9" cy="641.6" r="3.0"/>
<circle cx="565.0" cy="640.2" r="3.0"/>
<circle cx="567.0" cy="640.9" r="3.0"/>
<circle cx="568.1" cy="640.1" r="3.0"/>
<circle cx="570.7" cy="640.2" r="3.0"/>
<circle cx="572.5" cy="641.3" r="3.0"/>
<circle cx="574.4" cy="640.5" r="3.0"/>
<circle cx="576.6" cy="640.8" r="3.0"/>
<circle cx="578.9" cy="641.1" r="3.0"/>
<circle cx="581.3" cy="641.9" r="3.0"/>
<circle cx="582.7" cy="640.5" r="3.0"/>
<circle cx="583.4" cy="641.8" r="3.0"/>
<circle cx="586.7" cy="641.2" r="3.0"/>
<circle cx="587.8" cy="640.5" r="3.0"/>
<circle cx="590.0" cy="641.0" r="3.0"/>
<circle cx="592.4" cy="631.1" r="3.0"/>
<circle cx="594.1" cy="631.2" r="3.0"/>
<circle cx="596.3" cy="630.2" r="3.0"/>
<circle cx="597.2" cy="631.8" r="3.0"/>
<circle cx="600.4" cy="631.5" r="3.0"/>
<circle cx="600.6" cy="629.8" r="3.0"/>
<circle cx="602.9" cy="630.5" r="3.0"/>
<circle cx="605.5" cy="629.7" r="3.0"/>
<circle cx="607.3" cy="629.6" r="3.0"/>
<circle cx="608.3" cy="630.8" r="3.0"/>
<circle cx="611.1" cy="630.6" r="3.0"/>
<circle cx="612.6" cy="630.2" r="3.0"/>
<circle cx="614.2" cy="629.9" r="3.0"/>
<circle cx="617.2" cy="630.8" r="3.0"/>
<circle cx="617.7" cy="629.3" r="3.0"/>
<circle cx="621.1" cy="630.2" r="3.0"/>
<circle cx="622.9" cy="629.4" r="3.0"/>
<circle cx="624.1" cy="629.4" r="3.0"/>
<circle cx="626.8" cy="629.5" r="3.0"/>
<circle cx="628.4" cy="630.7" r="3.0"/>
<circle cx="629.7" cy="629.8" r="3.0"/>
<circle cx="632.4" cy="630.4" r="3.0"/>
<circle cx="633.7" cy="629.3" r="3.0"/>
<circle cx="634.9" cy="630.2" r="3.0"/>
<circle cx="636.8" cy="628.6" r="3.0"/>
<circle cx="639.6" cy="629.3" r="3.0"/>
<circle cx="641.8" cy="628.9" r="3.0"/>
<circle cx="643.9" cy="628.4" r="3.0"/>
<circle cx="644.6" cy="629.5" r="3.0"/>
<circle cx="646.3" cy="628.7" r="3.0"/>
<circle cx="649.0" cy="629.0" r="3.0"/>
<circle cx="592.4" cy="629.4" r="3.0"/>
<circle cx="593.5" cy="627.9" r="3.0"/>
<circle cx="595.6" cy="628.6" r="3.0"/>
<circle cx="597.6" cy="627.0" r="3.0"/>
<circle cx="600.2" cy="627.5" r="3.0"/>
<circle cx="602.5" cy="627.8" r="3.0"/>
<circle cx="604.5" cy="626.4" r="3.0"/>
<circle cx="606.2" cy="625.7" r="3.0"/>
<circle cx="607.2" cy="625.5" r="3.0"/>
<circle cx="610.3" cy="626.1" r="3.0"/>
<circle cx="610.9" cy="624.6" r="3.0"/>
<circle cx="613.1" cy="624.2" r="3.0"/>
<circle cx="615.1" cy="623.8" r="3.0"/>
<circle cx="616.6" cy="623.8" r="3.0"/>
<circle cx="619.8" cy="623.3" r="3.0"/>
<circle cx="621.8" cy="622.9" r="3.0"/>
<circle cx="622.4" cy="622.9" r="3.0"/>
<circle cx="625.8" cy="621.6" r="3.0"/>
<circle cx="625.9" cy="621.6" r="3.0"/>
<circle cx="628.9" cy="621.3" r="3.0"/>
<circle cx="631.6" cy="621.1" r="3.0"/>
<circle cx="633.1" cy="619.5" r="3.0"/>
<circle cx="634.5" cy="620.5" r="3.0"/>
<circle cx="635.5" cy="618.7" r="3.0"/>
<circle cx="638.7" cy="619.9" r="3.0"/>
<circle cx="639.2" cy="619.0" r="3.0"/>
<circle cx="641.2" cy="618.8" r="3.0"/>
<circle cx="644.1" cy="617.4" r="3.0"/>
<circle cx="645.1" cy="618.0" r="3.0"/>
<circle cx="647.6" cy="617.6" r="3.0"/>
<circle cx="649.3" cy="616.3" r="3.0"/>
<circle cx="652.3" cy="616.6" r="3.0"/>
<circle cx="653.2" cy="615.9" r="3.0"/>
<circle cx="655.6" cy="615.8" r="3.0"/>
<circle cx="657.8" cy="614.8" r="3.0"/>
<circle cx="659.5" cy="614.8" r="3.0"/>
<circle cx="661.4" cy="614.5" r="3.0"/>
<circle cx="663.3" cy="614.2" r="3.0"/>
<circle cx="665.4" cy="613.1" r="3.0"/>
<circle cx="666.4" cy="612.8" r="3.0"/>
<circle cx="668.8" cy="611.6" r="3.0"/>
<circle cx="669.9" cy="610.6" r="3.0"/>
<circle cx="672.4" cy="611.7" r="3.0"/>
<circle cx="673.6" cy="609.5" r="3.0"/>
<circle cx="675.1" cy="609.5" r="3.0"/>
<circle cx="677.1" cy="610.1" r="3.0"/>
<circle cx="678.5" cy="608.2" r="3.0"/>
<circle cx="680.5" cy="608.4" r="3.0"/>
<circle cx="683.7" cy="606.9" r="3.0"/>
<circle cx="684.1" cy="606.9" r="3.0"/>
<circle cx="686.8" cy="606.8" r="3.0"/>
<circle cx="687.4" cy="604.2" r="3.0"/>
<circle cx="689.4" cy="603.4" r="3.0"/>
<circle cx="691.1" cy="603.4" r="3.0"/>
<circle cx="693.5" cy="601.4" r="3.0"/>
<circle cx="694.4" cy="600.6" r="3.0"/>
<circle cx="696.0" cy="600.5" r="3.0"/>
<circle cx="698.0" cy="599.1" r="3.0"/>
<circle cx="700.6" cy="598.0" r="3.0"/>
<circle cx="701.3" cy="597.9" r="3.0"/>
<circle cx="704.3" cy="596.0" r="3.0"/>
<circle cx="705.3" cy="596.4" r="3.0"/>
<circle cx="707.0" cy="594.1" r="3.0"/>
<circle cx="707.8" cy="594.7" r="3.0"/>
<circle cx="711.1" cy="592.8" r="3.0"/>
<circle cx="712.3" cy="592.2" r="3.0"/>
<circle cx="713.5" cy="592.3" r="3.0"/>
<circle cx="716.1" cy="590.0" r="3.0"/>
<circle cx="716.5" cy="589.6" r="3.0"/>
<circle cx="719.0" cy="589.4" r="3.0"/>
<circle cx="721.4" cy="588.2" r="3.0"/>
<circle cx="722.1" cy="586.1" r="3.0"/>
<circle cx="724.3" cy="585.2" r="3.0"/>
<circle cx="727.2" cy="584.5" r="3.0"/>
<circle cx="728.6" cy="584.3" r="3.0"/>
<circle cx="729.7" cy="582.2" r="3.0"/>
<circle cx="732.0" cy="581.0" r="3.0"/>
<circle cx="599.3" cy="625.5" r="3.0"/>
<circle cx="600.9" cy="625.3" r="3.0"/>
<circle cx="604.5" cy="624.9" r="3.0"/>
<circle cx="604.9" cy="623.4" r="3.0"/>
<circle cx="608.1" cy="622.7" r="3.0"/>
<circle cx="609.5" cy="623.0" r="3.0"/>
<circle cx="612.3" cy="622.9" r="3.0"/>
<circle cx="614.0" cy="621.9" r="3.0"/>
<circle cx="615.8" cy="621.8" r="3.0"/>
<circle cx="618.0" cy="620.8" r="3.0"/>
<circle cx="619.7" cy="620.6" r="3.0"/>
<circle cx="621.0" cy="620.9" r="3.0"/>
<circle cx="622.2" cy="621.1" r="3.0"/>
<circle cx="624.4" cy="619.7" r="3.0"/>
<circle cx="625.8" cy="619.3" r="3.0"/>
<circle cx="628.5" cy="619.7" r="3.0"/>
<circle cx="630.2" cy="619.3" r="3.0"/>
<circle cx="631.6" cy="618.3" r="3.0"/>
<circle cx="634.2" cy="619.1" r="3.0"/>
<circle cx="636.8" cy="618.1" r="3.0"/>
<circle cx="637.1" cy="617.1" r="3.0"/>
<circle cx="640.4" cy="616.5" r="3.0"/>
<circle cx="642.0" cy="616.4" r="3.0"/>
<circle cx="642.8" cy="616.9" r="3.0"/>
<circle cx="646.3" cy="614.8" r="3.0"/>
<circle cx="647.9" cy="614.5" r="3.0"/>
<circle cx="649.3" cy="614.5" r="3.0"/>
<circle cx="651.0" cy="613.5" r="3.0"/>
<circle cx="653.1" cy="613.7" r="3.0"/>
<circle cx="654.8" cy="612.2" r="3.0"/>
<circle cx="657.6" cy="611.9" r="3.0"/>
<circle cx="659.9" cy="611.9" r="3.0"/>
<circle cx="661.4" cy="610.9" r="3.0"/>
<circle cx="663.5" cy="609.9" r="3.0"/>
<circle cx="664.0" cy="609.4" r="3.0"/>
<circle cx="667.0" cy="610.1" r="3.0"/>
<circle cx="667.9" cy="608.9" r="3.0"/>
<circle cx="671.2" cy="608.8" r="3.0"/>
<circle cx="671.6" cy="607.5" r="3.0"/>
<circle cx="673.6" cy="606.8" r="3.0"/>
<circle cx="676.0" cy="606.2" r="3.0"/>
<circle cx="678.9" cy="606.4" r="3.0"/>
<circle cx="680.0" cy="606.3" r="3.0"/>
<circle cx="682.3" cy="605.8" r="3.0"/>
<circle cx="683.3" cy="603.9" r="3.0"/>
<circle cx="685.2" cy="602.5" r="3.0"/>
<circle cx="686.9" cy="603.0" r="3.0"/>
<circle cx="689.9" cy="602.3" r="3.0"/>
<circle cx="691.0" cy="601.1" r="3.0"/>
<circle cx="691.5" cy="599.7" r="3.0"/>
<circle cx="694.0" cy="599.4" r="3.0"/>
<circle cx="695.3" cy="598.0" r="3.0"/>
<circle cx="697.9" cy="598.0" r="3.0"/>
<circle cx="700.3" cy="596.8" r="3.0"/>
<circle cx="700.7" cy="596.2" r="3.0"/>
<circle cx="704.0" cy="595.0" r="3.0"/>
<circle cx="704.7" cy="594.0" r="3.0"/>
<circle cx="706.0" cy="593.5" r="3.0"/>
<circle cx="709.4" cy="592.2" r="3.0"/>
<circle cx="710.5" cy="592.0" r="3.0"/>
<circle cx="711.2" cy="591.3" r="3.0"/>
<circle cx="713.8" cy="588.9" r="3.0"/>
<circle cx="714.4" cy="588.1" r="3.0"/>
<circle cx="717.1" cy="588.1" r="3.0"/>
<circle cx="718.3" cy="587.7" r="3.0"/>
<circle cx="720.0" cy="585.8" r="3.0"/>
<circle cx="721.2" cy="585.9" r="3.0"/>
<circle cx="723.1" cy="585.0" r="3.0"/>
<circle cx="725.8" cy="583.6" r="3.0"/>
<circle cx="727.7" cy="582.2" r="3.0"/>
<circle cx="730.2" cy="582.8" r="3.0"/>
<circle cx="731.9" cy="581.3" r="3.0"/>
<circle cx="732.4" cy="580.9" r="3.0"/>
<circle cx="735.0" cy="579.5" r="3.0"/>
<circle cx="595.6" cy="627.8" r="3.0"/>
<circle cx="597.4" cy="627.1" r="3.0"/>
<circle cx="600.6" cy="626.3" r="3.0"/>
<circle cx="602.0" cy="626.0" r="3.0"/>
<circle cx="602.9" cy="626.2" r="3.0"/>
<circle cx="606.8" cy="627.7" r="3.0"/>
<circle cx="608.1" cy="626.4" r="3.0"/>
<circle cx="610.1" cy="627.2" r="3.0"/>
<circle cx="611.5" cy="626.9" r="3.0"/>
<circle cx="614.3" cy="625.7" r="3.0"/>
<circle cx="615.0" cy="626.6" r="3.0"/>
<circle cx="616.9" cy="626.4" r="3.0"/>
<circle cx="619.7" cy="625.9" r="3.0"/>
<circle cx="621.6" cy="626.0" r="3.0"/>
<circle cx="623.6" cy="626.1" r="3.0"/>
<circle cx="625.7" cy="625.5" r="3.0"/>
<circle cx="627.7" cy="625.7" r="3.0"/>
<circle cx="630.3" cy="626.6" r="3.0"/>
<circle cx="631.3" cy="626.2" r="3.0"/>
<circle cx="633.5" cy="626.7" r="3.0"/>
<circle cx="635.8" cy="626.8" r="3.0"/>
<circle cx="637.2" cy="627.2" r="3.0"/>
<circle cx="639.9" cy="626.9" r="3.0"/>
<circle cx="641.0" cy="626.0" r="3.0"/>
<circle cx="643.2" cy="626.9" r="3.0"/>
<circle cx="645.1" cy="626.1" r="3.0"/>
<circle cx="646.9" cy="626.8" r="3.0"/>
<circle cx="649.0" cy="626.0" r="3.0"/>
</g>
<g fill="#a2ea3e" stroke="#000" stroke-width="1.0">
<circle cx="394.6" cy="618.3" r="3.0"/>
<circle cx="397.5" cy="620.0" r="3.0"/>
<circle cx="399.5" cy="619.4" r="3.0"/>
<circle cx="401.5" cy="618.9" r="3.0"/>
<circle cx="403.2" cy="618.4" r="3.0"/>
<circle cx="404.2" cy="619.2" r="3.0"/>
<circle cx="407.0" cy="619.2" r="3.0"/>
<circle cx="408.1" cy="619.8" r="3.0"/>
<circle cx="411.1" cy="618.9" r="3.0"/>
<circle cx="412.6" cy="619.2" r="3.0"/>
<circle cx="414.5" cy="618.6" r="3.0"/>
<circle cx="417.8" cy="620.4" r="3.0"/>
<circle cx="419.3" cy="620.3" r="3.0"/>
<circle cx="420.8" cy="620.2" r="3.0"/>
<circle cx="422.4" cy="620.1" r="3.0"/>
<circle cx="425.0" cy="619.6" r="3.0"/>
<circle cx="495.1" cy="632.1" r="3.0"/>
<circle cx="496.1" cy="631.6" r="3.0"/>
<circle cx="498.1" cy="630.8" r="3.0"/>
<circle cx="501.7" cy="629.4" r="3.0"/>
<circle cx="502.3" cy="629.7" r="3.0"/>
<circle cx="504.4" cy="628.9" r="3.0"/>
<circle cx="507.5" cy="630.1" r="3.0"/>
<circle cx="508.4" cy="628.8" r="3.0"/>
<circle cx="510.7" cy="627.9" r="3.0"/>
<circle cx="511.6" cy="629.3" r="3.0"/>
<circle cx="514.1" cy="628.2" r="3.0"/>
<circle cx="517.3" cy="628.8" r="3.0"/>
<circle cx="518.3" cy="627.0" r="3.0"/>
<circle cx="519.9" cy="628.1" r="3.0"/>
<circle cx="523.0" cy="626.3" r="3.0"/>
<circle cx="524.8" cy="626.3" r="3.0"/>
<circle cx="526.1" cy="625.7" r="3.0"/>
<circle cx="528.8" cy="627.0" r="3.0"/>
<circle cx="529.4" cy="626.0" r="3.0"/>
<circle cx="531.4" cy="626.4" r="3.0"/>
<circle cx="533.1" cy="624.8" r="3.0"/>
<circle cx="536.5" cy="625.1" r="3.0"/>
<circle cx="538.8" cy="626.2" r="3.0"/>
<circle cx="540.4" cy="624.7" r="3.0"/>
<circle cx="542.4" cy="626.2" r="3.0"/>
<circle cx="543.9" cy="624.4" r="3.0"/>
<circle cx="545.4" cy="624.8" r="3.0"/>
<circle cx="548.4" cy="624.5" r="3.0"/>
<circle cx="549.4" cy="624.6" r="3.0"/>
<circle cx="552.3" cy="625.6" r="3.0"/>
<circle cx="553.7" cy="625.3" r="3.0"/>
<circle cx="556.8" cy="625.1" r="3.0"/>
<circle cx="557.5" cy="624.4" r="3.0"/>
<circle cx="560.9" cy="625.1" r="3.0"/>
<circle cx="561.6" cy="625.0" r="3.0"/>
<circle cx="563.2" cy="625.6" r="3.0"/>
<circle cx="565.9" cy="624.7" r="3.0"/>
<circle cx="567.9" cy="623.2" r="3.0"/>
<circle cx="569.9" cy="623.2" r="3.0"/>
<circle cx="571.1" cy="623.8" r="3.0"/>
<circle cx="572.6" cy="622.3" r="3.0"/>
<circle cx="575.8" cy="621.7" r="3.0"/>
<circle cx="576.7" cy="621.9" r="3.0"/>
<circle cx="578.4" cy="622.1" r="3.0"/>
<circle cx="581.8" cy="619.9" r="3.0"/>
<circle cx="582.6" cy="620.9" r="3.0"/>
<circle cx="584.3" cy="620.7" r="3.0"/>
<circle cx="586.4" cy="618.8" r="3.0"/>
<circle cx="588.4" cy="619.2" r="3.0"/>
<circle cx="589.9" cy="618.8" r="3.0"/>
<circle cx="592.6" cy="618.0" r="3.0"/>
<circle cx="593.9" cy="618.3" r="3.0"/>
<circle cx="596.2" cy="617.2" r="3.0"/>
<circle cx="598.7" cy="616.0" r="3.0"/>
<circle cx="600.2" cy="615.6" r="3.0"/>
<circle cx="601.8" cy="615.3" r="3.0"/>
<circle cx="603.4" cy="615.9" r="3.0"/>
<circle cx="606.0" cy="615.5" r="3.0"/>
<circle cx="606.8" cy="614.5" r="3.0"/>
<circle cx="608.7" cy="614.2" r="3.0"/>
<circle cx="611.2" cy="612.7" r="3.0"/>
<circle cx="613.3" cy="613.6" r="3.0"/>
<circle cx="615.2" cy="613.5" r="3.0"/>
<circle cx="616.3" cy="611.6" r="3.0"/>
<circle cx="617.9" cy="611.9" r="3.0"/>
<circle cx="620.6" cy="611.4" r="3.0"/>
<circle cx="622.2" cy="611.6" r="3.0"/>
<circle cx="623.7" cy="611.4" r="3.0"/>
<circle cx="626.6" cy="610.1" r="3.0"/>
<circle cx="628.9" cy="608.8" r="3.0"/>
<circle cx="629.4" cy="608.4" r="3.0"/>
<circle cx="631.1" cy="607.8" r="3.0"/>
<circle cx="634.1" cy="607.6" r="3.0"/>
<circle cx="635.2" cy="607.1" r="3.0"/>
<circle cx="636.7" cy="606.9" r="3.0"/>
<circle cx="638.7" cy="605.2" r="3.0"/>
<circle cx="640.5" cy="605.5" r="3.0"/>
<circle cx="643.7" cy="605.0" r="3.0"/>
<circle cx="644.0" cy="603.7" r="3.0"/>
<circle cx="646.4" cy="602.7" r="3.0"/>
<circle cx="649.5" cy="601.7" r="3.0"/>
<circle cx="650.4" cy="602.5" r="3.0"/>
<circle cx="653.3" cy="601.2" r="3.0"/>
<circle cx="654.1" cy="602.3" r="3.0"/>
<circle cx="655.2" cy="601.1" r="3.0"/>
<circle cx="658.8" cy="600.8" r="3.0"/>
<circle cx="659.7" cy="601.0" r="3.0"/>
<circle cx="661.7" cy="600.5" r="3.0"/>
<circle cx="662.8" cy="602.2" r="3.0"/>
<circle cx="666.2" cy="601.6" r="3.0"/>
<circle cx="667.1" cy="600.5" r="3.0"/>
<circle cx="669.0" cy="598.7" r="3.0"/>
<circle cx="670.1" cy="598.4" r="3.0"/>
<circle cx="671.2" cy="595.5" r="3.0"/>
<circle cx="673.7" cy="594.3" r="3.0"/>
<circle cx="673.1" cy="592.1" r="3.0"/>
<circle cx="675.9" cy="590.1" r="3.0"/>
<circle cx="677.0" cy="590.0" r="3.0"/>
<circle cx="679.7" cy="588.5" r="3.0"/>
<circle cx="681.4" cy="586.9" r="3.0"/>
<circle cx="682.3" cy="587.1" r="3.0"/>
<circle cx="684.2" cy="586.5" r="3.0"/>
<circle cx="685.9" cy="585.0" r="3.0"/>
<circle cx="687.7" cy="584.9" r="3.0"/>
<circle cx="689.6" cy="583.7" r="3.0"/>
<circle cx="691.7" cy="583.6" r="3.0"/>
<circle cx="693.8" cy="583.0" r="3.0"/>
<circle cx="697.1" cy="583.0" r="3.0"/>
<circle cx="698.8" cy="581.5" r="3.0"/>
<circle cx="699.8" cy="580.6" r="3.0"/>
<circle cx="702.3" cy="580.6" r="3.0"/>
<circle cx="703.5" cy="579.4" r="3.0"/>
<circle cx="705.2" cy="579.3" r="3.0"/>
<circle cx="707.6" cy="580.0" r="3.0"/>
<circle cx="710.2" cy="578.1" r="3.0"/>
<circle cx="711.4" cy="577.3" r="3.0"/>
<circle cx="714.6" cy="577.1" r="3.0"/>
<circle cx="716.2" cy="577.2" r="3.0"/>
<circle cx="718.4" cy="575.2" r="3.0"/>
<circle cx="719.2" cy="575.4" r="3.0"/>
<circle cx="720.7" cy="575.8" r="3.0"/>
<circle cx="723.1" cy="575.2" r="3.0"/>
<circle cx="725.5" cy="573.5" r="3.0"/>
<circle cx="727.3" cy="573.6" r="3.0"/>
<circle cx="728.6" cy="573.1" r="3.0"/>
<circle cx="731.7" cy="572.6" r="3.0"/>
<circle cx="733.1" cy="573.0" r="3.0"/>
<circle cx="735.5" cy="572.2" r="3.0"/>
<circle cx="737.9" cy="572.1" r="3.0"/>
<circle cx="739.9" cy="572.6" r="3.0"/>
<circle cx="740.7" cy="571.4" r="3.0"/>
<circle cx="743.0" cy="572.1" r="3.0"/>
<circle cx="745.2" cy="571.2" r="3.0"/>
<circle cx="748.1" cy="570.6" r="3.0"/>
<circle cx="749.4" cy="570.8" r="3.0"/>
</g>
<g fill="#36e0d0" stroke="#000" stroke-width="1.0">
<circle cx="337.6" cy="624.9" r="3.0"/>
<circle cx="339.4" cy="623.3" r="3.0"/>
<circle cx="340.9" cy="625.2" r="3.0"/>
<circle cx="343.9" cy="624.5" r="3.0"/>
<circle cx="346.7" cy="624.6" r="3.0"/>
<circle cx="348.0" cy="624.8" r="3.0"/>
<circle cx="349.1" cy="624.4" r="3.0"/>
<circle cx="351.9" cy="625.9" r="3.0"/>
<circle cx="354.2" cy="624.7" r="3.0"/>
<circle cx="355.7" cy="624.3" r="3.0"/>
<circle cx="357.2" cy="624.3" r="3.0"/>
<circle cx="358.4" cy="623.9" r="3.0"/>
<circle cx="360.9" cy="624.8" r="3.0"/>
<circle cx="362.7" cy="623.9" r="3.0"/>
<circle cx="364.9" cy="625.0" r="3.0"/>
<circle cx="366.4" cy="625.3" r="3.0"/>
<circle cx="368.5" cy="622.5" r="3.0"/>
<circle cx="370.6" cy="623.8" r="3.0"/>
<circle cx="372.2" cy="624.8" r="3.0"/>
<circle cx="375.2" cy="623.7" r="3.0"/>
<circle cx="377.2" cy="622.5" r="3.0"/>
<circle cx="378.5" cy="622.7" r="3.0"/>
<circle cx="379.8" cy="624.2" r="3.0"/>
<circle cx="381.7" cy="625.2" r="3.0"/>
<circle cx="384.7" cy="625.2" r="3.0"/>
<circle cx="386.1" cy="622.7" r="3.0"/>
<circle cx="387.4" cy="624.2" r="3.0"/>
<circle cx="391.1" cy="624.0" r="3.0"/>
<circle cx="391.8" cy="624.7" r="3.0"/>
<circle cx="393.6" cy="623.7" r="3.0"/>
<circle cx="396.4" cy="626.0" r="3.0"/>
<circle cx="397.8" cy="625.3" r="3.0"/>
<circle cx="400.9" cy="623.5" r="3.0"/>
<circle cx="402.2" cy="624.7" r="3.0"/>
<circle cx="403.7" cy="622.8" r="3.0"/>
<circle cx="405.3" cy="623.4" r="3.0"/>
<circle cx="408.4" cy="623.0" r="3.0"/>
<circle cx="410.4" cy="623.4" r="3.0"/>
<circle cx="410.8" cy="624.9" r="3.0"/>
<circle cx="413.0" cy="622.4" r="3.0"/>
<circle cx="416.3" cy="622.5" r="3.0"/>
<circle cx="416.6" cy="621.9" r="3.0"/>
<circle cx="419.5" cy="623.1" r="3.0"/>
<circle cx="420.1" cy="623.5" r="3.0"/>
<circle cx="422.8" cy="622.6" r="3.0"/>
<circle cx="424.9" cy="623.2" r="3.0"/>
<circle cx="426.9" cy="624.2" r="3.0"/>
<circle cx="428.8" cy="624.7" r="3.0"/>
<circle cx="431.6" cy="622.3" r="3.0"/>
<circle cx="432.2" cy="623.6" r="3.0"/>
<circle cx="434.1" cy="623.8" r="3.0"/>
<circle cx="436.8" cy="624.0" r="3.0"/>
<circle cx="439.2" cy="624.8" r="3.0"/>
<circle cx="439.5" cy="622.9" r="3.0"/>
<circle cx="442.1" cy="623.5" r="3.0"/>
<circle cx="443.8" cy="622.5" r="3.0"/>
<circle cx="446.4" cy="623.6" r="3.0"/>
<circle cx="447.3" cy="621.4" r="3.0"/>
<circle cx="449.4" cy="621.2" r="3.0"/>
<circle cx="451.7" cy="620.9" r="3.0"/>
<circle cx="452.7" cy="622.7" r="3.0"/>
<circle cx="454.7" cy="622.3" r="3.0"/>
<circle cx="456.7" cy="622.3" r="3.0"/>
<circle cx="459.9" cy="621.5" r="3.0"/>
<circle cx="460.6" cy="622.7" r="3.0"/>
<circle cx="463.9" cy="620.3" r="3.0"/>
<circle cx="464.6" cy="622.4" r="3.0"/>
<circle cx="467.0" cy="621.3" r="3.0"/>
<circle cx="435.3" cy="615.0" r="3.0"/>
<circle cx="436.4" cy="616.0" r="3.0"/>
<circle cx="438.6" cy="615.6" r="3.0"/>
<circle cx="439.9" cy="615.3" r="3.0"/>
<circle cx="443.5" cy="616.7" r="3.0"/>
<circle cx="443.8" cy="617.6" r="3.0"/>
<circle cx="446.5" cy="618.4" r="3.0"/>
<circle cx="447.9" cy="618.9" r="3.0"/>
<circle cx="450.4" cy="617.0" r="3.0"/>
<circle cx="452.9" cy="617.6" r="3.0"/>
<circle cx="453.4" cy="619.9" r="3.0"/>
<circle cx="456.5" cy="618.0" r="3.0"/>
<circle cx="457.7" cy="620.1" r="3.0"/>
<circle cx="460.8" cy="621.1" r="3.0"/>
<circle cx="461.8" cy="620.9" r="3.0"/>
<circle cx="464.3" cy="619.7" r="3.0"/>
<circle cx="465.8" cy="619.8" r="3.0"/>
<circle cx="277.0" cy="626.3" r="3.0"/>
<circle cx="286.0" cy="629.0" r="3.0"/>
<circle cx="294.3" cy="633.5" r="3.0"/>
<circle cx="314.5" cy="641.2" r="3.0"/>
</g>
<g fill="#f39232" stroke="#000" stroke-width="1.0">
<circle cx="249.6" cy="621.5" r="2.9"/>
<circle cx="251.5" cy="622.0" r="2.9"/>
<circle cx="252.2" cy="622.1" r="2.9"/>
<circle cx="254.8" cy="621.8" r="2.9"/>
<circle cx="256.5" cy="622.4" r="2.9"/>
<circle cx="258.0" cy="622.0" r="2.9"/>
<circle cx="260.5" cy="621.8" r="2.9"/>
<circle cx="262.7" cy="622.5" r="2.9"/>
<circle cx="265.6" cy="622.1" r="2.9"/>
<circle cx="267.3" cy="622.3" r="2.9"/>
<circle cx="268.6" cy="623.6" r="2.9"/>
<circle cx="270.6" cy="622.2" r="2.9"/>
<circle cx="273.0" cy="623.2" r="2.9"/>
</g>
<g fill="#4422c8" stroke="#000" stroke-width="1.0">
<circle cx="187.7" cy="609.5" r="3.0"/>
<circle cx="189.3" cy="609.7" r="3.0"/>
<circle cx="191.9" cy="609.8" r="3.0"/>
<circle cx="193.0" cy="608.9" r="3.0"/>
<circle cx="194.9" cy="609.6" r="3.0"/>
<circle cx="197.4" cy="609.1" r="3.0"/>
<circle cx="199.4" cy="610.1" r="3.0"/>
<circle cx="200.9" cy="610.6" r="3.0"/>
<circle cx="204.1" cy="610.2" r="3.0"/>
<circle cx="205.8" cy="610.6" r="3.0"/>
<circle cx="207.5" cy="610.4" r="3.0"/>
<circle cx="209.9" cy="611.3" r="3.0"/>
<circle cx="211.7" cy="611.1" r="3.0"/>
<circle cx="212.5" cy="612.3" r="3.0"/>
<circle cx="213.9" cy="611.6" r="3.0"/>
<circle cx="216.8" cy="613.2" r="3.0"/>
<circle cx="218.0" cy="611.9" r="3.0"/>
<circle cx="220.0" cy="613.7" r="3.0"/>
<circle cx="221.5" cy="613.2" r="3.0"/>
<circle cx="223.8" cy="613.5" r="3.0"/>
<circle cx="225.4" cy="613.6" r="3.0"/>
<circle cx="228.6" cy="614.3" r="3.0"/>
<circle cx="230.0" cy="613.9" r="3.0"/>
<circle cx="231.8" cy="613.3" r="3.0"/>
<circle cx="234.2" cy="614.7" r="3.0"/>
<circle cx="235.4" cy="614.8" r="3.0"/>
<circle cx="237.2" cy="614.5" r="3.0"/>
<circle cx="238.7" cy="615.2" r="3.0"/>
<circle cx="241.3" cy="615.2" r="3.0"/>
<circle cx="242.1" cy="615.6" r="3.0"/>
<circle cx="244.8" cy="615.8" r="3.0"/>
<circle cx="247.0" cy="616.7" r="3.0"/>
<circle cx="248.0" cy="616.0" r="3.0"/>
<circle cx="251.6" cy="616.7" r="3.0"/>
<circle cx="252.2" cy="617.0" r="3.0"/>
<circle cx="255.4" cy="616.5" r="3.0"/>
<circle cx="257.1" cy="616.2" r="3.0"/>
<circle cx="259.2" cy="617.1" r="3.0"/>
<circle cx="259.6" cy="618.1" r="3.0"/>
<circle cx="262.3" cy="618.5" r="3.0"/>
<circle cx="264.6" cy="618.4" r="3.0"/>
<circle cx="265.9" cy="619.0" r="3.0"/>
<circle cx="266.9" cy="619.0" r="3.0"/>
<circle cx="270.1" cy="618.0" r="3.0"/>
<circle cx="272.1" cy="618.6" r="3.0"/>
<circle cx="273.5" cy="619.6" r="3.0"/>
<circle cx="274.7" cy="618.7" r="3.0"/>
<circle cx="277.5" cy="618.5" r="3.0"/>
<circle cx="279.2" cy="620.2" r="3.0"/>
<circle cx="281.0" cy="619.3" r="3.0"/>
<circle cx="283.5" cy="620.7" r="3.0"/>
<circle cx="285.4" cy="620.3" r="3.0"/>
<circle cx="287.5" cy="621.1" r="3.0"/>
<circle cx="287.9" cy="620.4" r="3.0"/>
<circle cx="289.7" cy="620.0" r="3.0"/>
<circle cx="292.1" cy="621.8" r="3.0"/>
<circle cx="295.0" cy="620.6" r="3.0"/>
<circle cx="295.6" cy="621.3" r="3.0"/>
<circle cx="298.8" cy="622.0" r="3.0"/>
<circle cx="300.8" cy="621.1" r="3.0"/>
<circle cx="302.9" cy="621.6" r="3.0"/>
<circle cx="304.1" cy="623.2" r="3.0"/>
<circle cx="306.1" cy="622.0" r="3.0"/>
<circle cx="307.9" cy="622.7" r="3.0"/>
<circle cx="308.5" cy="622.7" r="3.0"/>
<circle cx="311.0" cy="623.5" r="3.0"/>
<circle cx="312.8" cy="623.7" r="3.0"/>
<circle cx="315.6" cy="623.0" r="3.0"/>
<circle cx="316.3" cy="624.2" r="3.0"/>
<circle cx="318.9" cy="623.3" r="3.0"/>
<circle cx="320.1" cy="625.2" r="3.0"/>
<circle cx="323.0" cy="624.2" r="3.0"/>
<circle cx="324.0" cy="625.7" r="3.0"/>
<circle cx="326.9" cy="625.4" r="3.0"/>
<circle cx="328.2" cy="624.7" r="3.0"/>
<circle cx="330.2" cy="624.6" r="3.0"/>
<circle cx="332.5" cy="625.4" r="3.0"/>
<circle cx="334.8" cy="625.5" r="3.0"/>
<circle cx="335.9" cy="625.9" r="3.0"/>
<circle cx="338.8" cy="625.8" r="3.0"/>
<circle cx="340.2" cy="625.8" r="3.0"/>
<circle cx="341.9" cy="626.1" r="3.0"/>
<circle cx="344.4" cy="626.3" r="3.0"/>
<circle cx="346.2" cy="627.3" r="3.0"/>
<circle cx="347.3" cy="628.0" r="3.0"/>
<circle cx="349.1" cy="627.9" r="3.0"/>
<circle cx="351.4" cy="627.5" r="3.0"/>
<circle cx="352.2" cy="627.6" r="3.0"/>
<circle cx="354.6" cy="627.9" r="3.0"/>
<circle cx="357.8" cy="627.8" r="3.0"/>
<circle cx="359.2" cy="628.8" r="3.0"/>
<circle cx="360.2" cy="628.4" r="3.0"/>
<circle cx="361.9" cy="629.6" r="3.0"/>
<circle cx="364.0" cy="628.9" r="3.0"/>
<circle cx="366.1" cy="629.9" r="3.0"/>
<circle cx="369.0" cy="629.6" r="3.0"/>
<circle cx="370.3" cy="628.9" r="3.0"/>
<circle cx="372.9" cy="629.0" r="3.0"/>
<circle cx="373.7" cy="629.8" r="3.0"/>
<circle cx="376.3" cy="630.6" r="3.0"/>
<circle cx="377.4" cy="631.3" r="3.0"/>
<circle cx="380.6" cy="629.7" r="3.0"/>
<circle cx="381.8" cy="630.8" r="3.0"/>
<circle cx="383.2" cy="631.0" r="3.0"/>
<circle cx="385.0" cy="631.7" r="3.0"/>
<circle cx="387.5" cy="632.5" r="3.0"/>
<circle cx="390.1" cy="632.7" r="3.0"/>
<circle cx="390.8" cy="632.6" r="3.0"/>
<circle cx="393.2" cy="632.5" r="3.0"/>
<circle cx="395.8" cy="631.5" r="3.0"/>
<circle cx="396.6" cy="632.4" r="3.0"/>
<circle cx="398.9" cy="632.2" r="3.0"/>
<circle cx="401.5" cy="632.4" r="3.0"/>
<circle cx="402.2" cy="632.5" r="3.0"/>
<circle cx="404.1" cy="633.9" r="3.0"/>
<circle cx="405.4" cy="632.9" r="3.0"/>
<circle cx="408.4" cy="634.0" r="3.0"/>
<circle cx="410.5" cy="633.5" r="3.0"/>
<circle cx="412.6" cy="634.4" r="3.0"/>
<circle cx="414.4" cy="633.2" r="3.0"/>
<circle cx="415.8" cy="633.0" r="3.0"/>
<circle cx="418.5" cy="634.8" r="3.0"/>
<circle cx="420.5" cy="633.0" r="3.0"/>
<circle cx="421.4" cy="634.0" r="3.0"/>
<circle cx="423.7" cy="633.1" r="3.0"/>
<circle cx="426.1" cy="633.5" r="3.0"/>
<circle cx="427.5" cy="633.1" r="3.0"/>
<circle cx="429.6" cy="633.1" r="3.0"/>
<circle cx="430.5" cy="633.9" r="3.0"/>
<circle cx="432.9" cy="634.4" r="3.0"/>
<circle cx="434.8" cy="633.6" r="3.0"/>
<circle cx="436.3" cy="633.2" r="3.0"/>
<circle cx="439.0" cy="633.9" r="3.0"/>
<circle cx="441.0" cy="634.5" r="3.0"/>
<circle cx="442.2" cy="634.5" r="3.0"/>
<circle cx="444.3" cy="634.7" r="3.0"/>
<circle cx="447.0" cy="633.5" r="3.0"/>
<circle cx="449.1" cy="634.4" r="3.0"/>
<circle cx="451.7" cy="633.5" r="3.0"/>
<circle cx="451.8" cy="633.0" r="3.0"/>
<circle cx="455.3" cy="634.1" r="3.0"/>
<circle cx="457.1" cy="633.0" r="3.0"/>
<circle cx="458.6" cy="632.7" r="3.0"/>
<circle cx="459.7" cy="633.2" r="3.0"/>
<circle cx="463.4" cy="633.9" r="3.0"/>
<circle cx="465.1" cy="632.7" r="3.0"/>
<circle cx="466.2" cy="632.7" r="3.0"/>
<circle cx="467.8" cy="632.8" r="3.0"/>
<circle cx="471.1" cy="633.2" r="3.0"/>
<circle cx="472.1" cy="633.9" r="3.0"/>
<circle cx="474.9" cy="634.4" r="3.0"/>
<circle cx="476.2" cy="633.5" r="3.0"/>
<circle cx="478.0" cy="633.5" r="3.0"/>
<circle cx="305.8" cy="624.3" r="3.0"/>
<circle cx="306.5" cy="625.2" r="3.0"/>
<circle cx="308.3" cy="624.7" r="3.0"/>
<circle cx="310.6" cy="625.1" r="3.0"/>
<circle cx="312.4" cy="625.2" r="3.0"/>
<circle cx="314.4" cy="624.7" r="3.0"/>
<circle cx="317.1" cy="624.9" r="3.0"/>
<circle cx="318.4" cy="626.1" r="3.0"/>
<circle cx="320.1" cy="625.7" r="3.0"/>
<circle cx="321.4" cy="626.2" r="3.0"/>
<circle cx="323.7" cy="626.6" r="3.0"/>
<circle cx="325.5" cy="627.4" r="3.0"/>
<circle cx="327.9" cy="626.1" r="3.0"/>
<circle cx="329.6" cy="628.3" r="3.0"/>
<circle cx="330.7" cy="627.7" r="3.0"/>
<circle cx="334.6" cy="627.5" r="3.0"/>
<circle cx="335.7" cy="627.7" r="3.0"/>
<circle cx="337.1" cy="628.4" r="3.0"/>
<circle cx="339.5" cy="628.1" r="3.0"/>
<circle cx="341.3" cy="628.7" r="3.0"/>
<circle cx="343.7" cy="628.0" r="3.0"/>
<circle cx="344.3" cy="628.6" r="3.0"/>
<circle cx="346.5" cy="629.9" r="3.0"/>
<circle cx="348.8" cy="630.2" r="3.0"/>
<circle cx="350.6" cy="629.3" r="3.0"/>
<circle cx="353.1" cy="629.1" r="3.0"/>
<circle cx="355.6" cy="630.8" r="3.0"/>
<circle cx="356.2" cy="630.0" r="3.0"/>
<circle cx="359.1" cy="631.2" r="3.0"/>
<circle cx="360.6" cy="629.9" r="3.0"/>
<circle cx="362.8" cy="630.1" r="3.0"/>
<circle cx="364.4" cy="631.4" r="3.0"/>
<circle cx="366.9" cy="631.8" r="3.0"/>
<circle cx="367.0" cy="632.6" r="3.0"/>
<circle cx="370.4" cy="632.1" r="3.0"/>
<circle cx="370.8" cy="632.6" r="3.0"/>
<circle cx="373.6" cy="632.7" r="3.0"/>
<circle cx="376.6" cy="633.4" r="3.0"/>
<circle cx="376.7" cy="633.4" r="3.0"/>
<circle cx="379.3" cy="633.5" r="3.0"/>
<circle cx="381.1" cy="633.1" r="3.0"/>
<circle cx="383.1" cy="632.7" r="3.0"/>
<circle cx="384.8" cy="634.1" r="3.0"/>
<circle cx="386.2" cy="633.1" r="3.0"/>
<circle cx="389.7" cy="634.4" r="3.0"/>
<circle cx="391.0" cy="633.5" r="3.0"/>
<circle cx="392.1" cy="634.2" r="3.0"/>
<circle cx="395.6" cy="634.9" r="3.0"/>
<circle cx="397.5" cy="634.4" r="3.0"/>
<circle cx="398.4" cy="635.3" r="3.0"/>
<circle cx="401.1" cy="634.7" r="3.0"/>
<circle cx="403.1" cy="635.6" r="3.0"/>
<circle cx="403.3" cy="635.7" r="3.0"/>
<circle cx="405.9" cy="636.4" r="3.0"/>
<circle cx="408.9" cy="636.3" r="3.0"/>
<circle cx="410.4" cy="636.3" r="3.0"/>
<circle cx="412.5" cy="635.7" r="3.0"/>
<circle cx="414.3" cy="635.8" r="3.0"/>
<circle cx="415.9" cy="635.9" r="3.0"/>
<circle cx="417.3" cy="635.8" r="3.0"/>
<circle cx="419.3" cy="636.6" r="3.0"/>
<circle cx="421.5" cy="636.2" r="3.0"/>
<circle cx="423.5" cy="637.1" r="3.0"/>
<circle cx="425.0" cy="636.5" r="3.0"/>
<circle cx="427.2" cy="637.3" r="3.0"/>
<circle cx="428.8" cy="636.7" r="3.0"/>
<circle cx="430.5" cy="635.9" r="3.0"/>
<circle cx="433.4" cy="636.5" r="3.0"/>
<circle cx="434.4" cy="635.4" r="3.0"/>
<circle cx="437.4" cy="636.0" r="3.0"/>
<circle cx="439.1" cy="636.1" r="3.0"/>
<circle cx="440.8" cy="636.4" r="3.0"/>
<circle cx="443.5" cy="637.1" r="3.0"/>
<circle cx="444.3" cy="636.2" r="3.0"/>
<circle cx="445.8" cy="636.7" r="3.0"/>
<circle cx="447.4" cy="635.8" r="3.0"/>
<circle cx="450.8" cy="635.3" r="3.0"/>
<circle cx="452.5" cy="636.3" r="3.0"/>
<circle cx="454.1" cy="635.8" r="3.0"/>
<circle cx="455.2" cy="637.0" r="3.0"/>
<circle cx="458.3" cy="636.7" r="3.0"/>
<circle cx="458.9" cy="636.7" r="3.0"/>
<circle cx="461.1" cy="635.5" r="3.0"/>
<circle cx="463.6" cy="636.3" r="3.0"/>
<circle cx="464.7" cy="636.6" r="3.0"/>
<circle cx="467.5" cy="636.9" r="3.0"/>
<circle cx="470.1" cy="636.4" r="3.0"/>
<circle cx="470.9" cy="636.9" r="3.0"/>
<circle cx="473.5" cy="635.6" r="3.0"/>
<circle cx="475.0" cy="636.0" r="3.0"/>
<circle cx="453.7" cy="628.5" r="3.0"/>
<circle cx="454.4" cy="627.3" r="3.0"/>
<circle cx="455.8" cy="627.7" r="3.0"/>
<circle cx="458.2" cy="627.1" r="3.0"/>
<circle cx="460.1" cy="626.6" r="3.0"/>
<circle cx="462.5" cy="626.7" r="3.0"/>
<circle cx="464.0" cy="626.5" r="3.0"/>
<circle cx="466.3" cy="627.5" r="3.0"/>
<circle cx="467.5" cy="627.3" r="3.0"/>
<circle cx="470.8" cy="626.6" r="3.0"/>
<circle cx="472.1" cy="626.7" r="3.0"/>
<circle cx="473.9" cy="626.4" r="3.0"/>
<circle cx="476.6" cy="626.4" r="3.0"/>
<circle cx="477.2" cy="624.8" r="3.0"/>
<circle cx="480.4" cy="625.3" r="3.0"/>
<circle cx="482.0" cy="624.8" r="3.0"/>
<circle cx="483.3" cy="624.9" r="3.0"/>
<circle cx="485.7" cy="625.9" r="3.0"/>
<circle cx="487.2" cy="625.0" r="3.0"/>
<circle cx="488.7" cy="624.1" r="3.0"/>
<circle cx="491.8" cy="623.7" r="3.0"/>
<circle cx="493.7" cy="624.6" r="3.0"/>
<circle cx="493.9" cy="624.9" r="3.0"/>
<circle cx="495.8" cy="624.1" r="3.0"/>
<circle cx="497.8" cy="624.7" r="3.0"/>
<circle cx="500.0" cy="624.3" r="3.0"/>
<circle cx="501.4" cy="623.7" r="3.0"/>
<circle cx="503.4" cy="622.3" r="3.0"/>
<circle cx="506.3" cy="624.0" r="3.0"/>
<circle cx="508.4" cy="623.6" r="3.0"/>
<circle cx="510.5" cy="622.7" r="3.0"/>
<circle cx="511.0" cy="622.6" r="3.0"/>
<circle cx="513.1" cy="622.4" r="3.0"/>
<circle cx="515.3" cy="622.2" r="3.0"/>
<circle cx="517.5" cy="622.0" r="3.0"/>
</g>
<g fill="#d836d8" stroke="#000" stroke-width="1.0">
<circle cx="435.4" cy="614.9" r="3.0"/>
<circle cx="437.8" cy="614.3" r="3.0"/>
<circle cx="439.2" cy="614.1" r="3.0"/>
<circle cx="442.1" cy="614.9" r="3.0"/>
<circle cx="444.1" cy="613.1" r="3.0"/>
<circle cx="445.6" cy="613.3" r="3.0"/>
<circle cx="448.4" cy="614.3" r="3.0"/>
<circle cx="451.0" cy="614.2" r="3.0"/>
<circle cx="452.9" cy="613.8" r="3.0"/>
<circle cx="454.9" cy="612.0" r="3.0"/>
<circle cx="456.0" cy="612.9" r="3.0"/>
<circle cx="458.4" cy="612.8" r="3.0"/>
<circle cx="460.2" cy="613.2" r="3.0"/>
<circle cx="461.2" cy="612.2" r="3.0"/>
<circle cx="464.9" cy="611.1" r="3.0"/>
<circle cx="465.2" cy="612.6" r="3.0"/>
<circle cx="468.9" cy="610.7" r="3.0"/>
<circle cx="469.1" cy="612.2" r="3.0"/>
<circle cx="472.4" cy="611.3" r="3.0"/>
<circle cx="474.2" cy="611.5" r="3.0"/>
<circle cx="476.6" cy="609.8" r="3.0"/>
<circle cx="477.1" cy="611.2" r="3.0"/>
<circle cx="481.0" cy="611.0" r="3.0"/>
<circle cx="481.8" cy="609.8" r="3.0"/>
<circle cx="483.7" cy="608.9" r="3.0"/>
<circle cx="486.5" cy="609.2" r="3.0"/>
<circle cx="488.2" cy="609.5" r="3.0"/>
<circle cx="489.7" cy="609.5" r="3.0"/>
<circle cx="491.9" cy="608.4" r="3.0"/>
<circle cx="494.8" cy="608.1" r="3.0"/>
<circle cx="495.3" cy="608.0" r="3.0"/>
<circle cx="498.0" cy="608.8" r="3.0"/>
<circle cx="500.0" cy="608.0" r="3.0"/>
<circle cx="451.7" cy="609.5" r="3.0"/>
<circle cx="454.2" cy="609.4" r="3.0"/>
<circle cx="455.9" cy="609.2" r="3.0"/>
<circle cx="458.5" cy="608.9" r="3.0"/>
<circle cx="459.1" cy="609.0" r="3.0"/>
<circle cx="461.3" cy="609.8" r="3.0"/>
<circle cx="463.9" cy="609.7" r="3.0"/>
<circle cx="465.5" cy="608.2" r="3.0"/>
<circle cx="467.9" cy="608.4" r="3.0"/>
<circle cx="468.7" cy="608.6" r="3.0"/>
<circle cx="472.2" cy="608.3" r="3.0"/>
<circle cx="472.8" cy="609.3" r="3.0"/>
<circle cx="476.0" cy="608.1" r="3.0"/>
<circle cx="476.2" cy="608.8" r="3.0"/>
<circle cx="479.4" cy="607.7" r="3.0"/>
<circle cx="481.4" cy="607.7" r="3.0"/>
<circle cx="482.3" cy="607.9" r="3.0"/>
<circle cx="485.1" cy="607.6" r="3.0"/>
<circle cx="487.2" cy="606.5" r="3.0"/>
<circle cx="488.5" cy="607.1" r="3.0"/>
<circle cx="489.5" cy="608.0" r="3.0"/>
<circle cx="491.6" cy="606.5" r="3.0"/>
<circle cx="495.0" cy="607.8" r="3.0"/>
<circle cx="497.0" cy="606.5" r="3.0"/>
<circle cx="498.9" cy="605.9" r="3.0"/>
<circle cx="500.0" cy="606.5" r="3.0"/>
<circle cx="235.4" cy="605.3" r="3.0"/>
<circle cx="236.3" cy="603.8" r="3.0"/>
<circle cx="239.1" cy="605.5" r="3.0"/>
<circle cx="241.1" cy="605.8" r="3.0"/>
<circle cx="242.5" cy="604.8" r="3.0"/>
<circle cx="243.7" cy="604.7" r="3.0"/>
<circle cx="247.3" cy="604.5" r="3.0"/>
<circle cx="247.6" cy="605.2" r="3.0"/>
<circle cx="249.3" cy="605.3" r="3.0"/>
<circle cx="251.4" cy="605.1" r="3.0"/>
<circle cx="254.0" cy="606.1" r="3.0"/>
<circle cx="256.0" cy="606.7" r="3.0"/>
<circle cx="257.8" cy="607.2" r="3.0"/>
<circle cx="258.8" cy="605.9" r="3.0"/>
<circle cx="260.7" cy="606.2" r="3.0"/>
<circle cx="264.0" cy="607.6" r="3.0"/>
<circle cx="265.4" cy="606.3" r="3.0"/>
<circle cx="266.9" cy="607.2" r="3.0"/>
<circle cx="268.7" cy="607.8" r="3.0"/>
<circle cx="272.0" cy="607.3" r="3.0"/>
<circle cx="273.1" cy="608.3" r="3.0"/>
<circle cx="274.8" cy="607.1" r="3.0"/>
<circle cx="277.6" cy="608.8" r="3.0"/>
<circle cx="277.7" cy="608.6" r="3.0"/>
<circle cx="280.3" cy="607.3" r="3.0"/>
<circle cx="281.7" cy="607.7" r="3.0"/>
<circle cx="284.8" cy="607.9" r="3.0"/>
<circle cx="285.2" cy="608.1" r="3.0"/>
<circle cx="288.7" cy="608.8" r="3.0"/>
<circle cx="290.3" cy="608.9" r="3.0"/>
<circle cx="291.4" cy="608.2" r="3.0"/>
<circle cx="293.6" cy="608.4" r="3.0"/>
<circle cx="295.5" cy="609.7" r="3.0"/>
<circle cx="297.7" cy="609.6" r="3.0"/>
<circle cx="300.2" cy="609.5" r="3.0"/>
<circle cx="301.7" cy="610.8" r="3.0"/>
<circle cx="304.2" cy="610.0" r="3.0"/>
<circle cx="306.1" cy="610.3" r="3.0"/>
<circle cx="307.7" cy="611.3" r="3.0"/>
<circle cx="309.5" cy="611.5" r="3.0"/>
<circle cx="312.7" cy="611.6" r="3.0"/>
<circle cx="313.3" cy="611.0" r="3.0"/>
<circle cx="317.0" cy="610.7" r="3.0"/>
<circle cx="317.3" cy="611.8" r="3.0"/>
<circle cx="319.5" cy="611.7" r="3.0"/>
<circle cx="321.2" cy="612.4" r="3.0"/>
<circle cx="323.4" cy="610.8" r="3.0"/>
<circle cx="326.1" cy="611.3" r="3.0"/>
<circle cx="327.8" cy="611.6" r="3.0"/>
<circle cx="330.4" cy="611.7" r="3.0"/>
<circle cx="331.3" cy="610.7" r="3.0"/>
<circle cx="333.4" cy="611.3" r="3.0"/>
<circle cx="335.5" cy="612.0" r="3.0"/>
<circle cx="337.2" cy="611.0" r="3.0"/>
<circle cx="339.2" cy="611.8" r="3.0"/>
<circle cx="341.4" cy="612.8" r="3.0"/>
<circle cx="342.6" cy="611.8" r="3.0"/>
<circle cx="344.1" cy="612.6" r="3.0"/>
<circle cx="346.3" cy="612.7" r="3.0"/>
<circle cx="349.4" cy="611.5" r="3.0"/>
<circle cx="351.5" cy="612.1" r="3.0"/>
<circle cx="352.5" cy="612.2" r="3.0"/>
<circle cx="355.4" cy="612.1" r="3.0"/>
<circle cx="356.4" cy="611.7" r="3.0"/>
<circle cx="359.1" cy="612.2" r="3.0"/>
<circle cx="360.0" cy="611.6" r="3.0"/>
<circle cx="361.6" cy="612.9" r="3.0"/>
<circle cx="364.7" cy="613.3" r="3.0"/>
<circle cx="366.9" cy="612.7" r="3.0"/>
<circle cx="368.6" cy="612.8" r="3.0"/>
<circle cx="370.5" cy="613.0" r="3.0"/>
<circle cx="371.2" cy="613.1" r="3.0"/>
<circle cx="373.3" cy="612.0" r="3.0"/>
<circle cx="376.5" cy="611.6" r="3.0"/>
<circle cx="377.6" cy="612.2" r="3.0"/>
<circle cx="380.1" cy="612.8" r="3.0"/>
<circle cx="382.2" cy="613.5" r="3.0"/>
<circle cx="383.6" cy="611.8" r="3.0"/>
<circle cx="385.6" cy="611.9" r="3.0"/>
<circle cx="388.1" cy="613.5" r="3.0"/>
<circle cx="388.7" cy="612.1" r="3.0"/>
<circle cx="391.4" cy="613.3" r="3.0"/>
<circle cx="393.9" cy="613.0" r="3.0"/>
<circle cx="394.2" cy="613.2" r="3.0"/>
<circle cx="396.0" cy="613.5" r="3.0"/>
<circle cx="399.4" cy="613.3" r="3.0"/>
<circle cx="401.5" cy="612.9" r="3.0"/>
<circle cx="403.6" cy="613.0" r="3.0"/>
<circle cx="404.7" cy="612.5" r="3.0"/>
<circle cx="406.4" cy="611.7" r="3.0"/>
<circle cx="407.9" cy="613.2" r="3.0"/>
<circle cx="410.0" cy="612.9" r="3.0"/>
<circle cx="413.1" cy="613.0" r="3.0"/>
<circle cx="414.5" cy="612.2" r="3.0"/>
<circle cx="416.0" cy="612.0" r="3.0"/>
<circle cx="418.7" cy="612.9" r="3.0"/>
<circle cx="421.3" cy="612.2" r="3.0"/>
<circle cx="423.2" cy="613.4" r="3.0"/>
<circle cx="423.9" cy="613.4" r="3.0"/>
<circle cx="426.5" cy="613.4" r="3.0"/>
<circle cx="428.8" cy="612.1" r="3.0"/>
<circle cx="429.7" cy="612.5" r="3.0"/>
<circle cx="432.1" cy="611.5" r="3.0"/>
<circle cx="434.8" cy="612.5" r="3.0"/>
<circle cx="436.0" cy="612.9" r="3.0"/>
<circle cx="437.5" cy="611.8" r="3.0"/>
<circle cx="440.1" cy="611.7" r="3.0"/>
<circle cx="441.5" cy="611.2" r="3.0"/>
<circle cx="442.9" cy="611.7" r="3.0"/>
<circle cx="445.7" cy="612.7" r="3.0"/>
<circle cx="447.9" cy="611.5" r="3.0"/>
<circle cx="449.3" cy="611.0" r="3.0"/>
<circle cx="451.4" cy="612.3" r="3.0"/>
<circle cx="452.6" cy="611.1" r="3.0"/>
<circle cx="455.6" cy="611.6" r="3.0"/>
<circle cx="457.3" cy="611.2" r="3.0"/>
<circle cx="460.0" cy="611.6" r="3.0"/>
<circle cx="460.5" cy="610.7" r="3.0"/>
<circle cx="463.9" cy="610.6" r="3.0"/>
<circle cx="464.2" cy="610.9" r="3.0"/>
<circle cx="465.9" cy="609.5" r="3.0"/>
<circle cx="468.8" cy="609.6" r="3.0"/>
<circle cx="471.0" cy="610.4" r="3.0"/>
<circle cx="472.1" cy="610.3" r="3.0"/>
<circle cx="474.7" cy="610.0" r="3.0"/>
<circle cx="476.2" cy="609.3" r="3.0"/>
<circle cx="477.5" cy="609.3" r="3.0"/>
<circle cx="481.1" cy="610.0" r="3.0"/>
<circle cx="481.2" cy="608.2" r="3.0"/>
<circle cx="483.5" cy="609.3" r="3.0"/>
<circle cx="485.8" cy="608.0" r="3.0"/>
<circle cx="487.7" cy="608.8" r="3.0"/>
<circle cx="490.2" cy="608.3" r="3.0"/>
<circle cx="492.0" cy="608.7" r="3.0"/>
<circle cx="493.8" cy="607.3" r="3.0"/>
<circle cx="495.9" cy="607.3" r="3.0"/>
<circle cx="496.5" cy="607.8" r="3.0"/>
<circle cx="498.4" cy="606.9" r="3.0"/>
<circle cx="501.0" cy="607.5" r="3.0"/>
<circle cx="502.4" cy="608.3" r="3.0"/>
<circle cx="505.8" cy="607.3" r="3.0"/>
<circle cx="507.2" cy="606.8" r="3.0"/>
<circle cx="509.9" cy="606.2" r="3.0"/>
<circle cx="510.4" cy="606.3" r="3.0"/>
<circle cx="513.5" cy="606.7" r="3.0"/>
<circle cx="514.5" cy="606.4" r="3.0"/>
<circle cx="517.4" cy="605.9" r="3.0"/>
<circle cx="519.1" cy="606.7" r="3.0"/>
<circle cx="520.3" cy="605.9" r="3.0"/>
<circle cx="522.2" cy="605.9" r="3.0"/>
<circle cx="523.9" cy="606.1" r="3.0"/>
<circle cx="526.0" cy="605.3" r="3.0"/>
<circle cx="528.6" cy="605.5" r="3.0"/>
<circle cx="529.9" cy="606.2" r="3.0"/>
<circle cx="531.9" cy="604.8" r="3.0"/>
<circle cx="534.7" cy="605.6" r="3.0"/>
<circle cx="536.4" cy="604.0" r="3.0"/>
<circle cx="538.1" cy="604.3" r="3.0"/>
<circle cx="539.3" cy="603.9" r="3.0"/>
<circle cx="542.6" cy="603.4" r="3.0"/>
<circle cx="544.0" cy="602.5" r="3.0"/>
<circle cx="545.9" cy="601.7" r="3.0"/>
<circle cx="548.1" cy="602.0" r="3.0"/>
<circle cx="550.4" cy="601.2" r="3.0"/>
<circle cx="551.8" cy="600.1" r="3.0"/>
<circle cx="553.2" cy="601.3" r="3.0"/>
<circle cx="554.8" cy="600.6" r="3.0"/>
<circle cx="556.7" cy="599.7" r="3.0"/>
<circle cx="560.2" cy="599.0" r="3.0"/>
<circle cx="562.0" cy="598.3" r="3.0"/>
<circle cx="563.3" cy="599.4" r="3.0"/>
<circle cx="565.7" cy="598.2" r="3.0"/>
<circle cx="567.2" cy="598.4" r="3.0"/>
<circle cx="569.5" cy="598.3" r="3.0"/>
<circle cx="571.0" cy="597.1" r="3.0"/>
<circle cx="573.2" cy="597.6" r="3.0"/>
<circle cx="574.8" cy="598.2" r="3.0"/>
<circle cx="575.9" cy="597.6" r="3.0"/>
<circle cx="578.2" cy="597.3" r="3.0"/>
<circle cx="581.4" cy="596.2" r="3.0"/>
<circle cx="582.6" cy="596.6" r="3.0"/>
<circle cx="584.4" cy="595.7" r="3.0"/>
<circle cx="586.6" cy="596.9" r="3.0"/>
<circle cx="588.6" cy="595.5" r="3.0"/>
<circle cx="590.8" cy="595.6" r="3.0"/>
<circle cx="591.4" cy="595.8" r="3.0"/>
<circle cx="593.9" cy="595.5" r="3.0"/>
<circle cx="596.9" cy="595.3" r="3.0"/>
<circle cx="598.8" cy="594.7" r="3.0"/>
<circle cx="600.3" cy="594.0" r="3.0"/>
<circle cx="601.3" cy="595.0" r="3.0"/>
<circle cx="604.1" cy="595.1" r="3.0"/>
<circle cx="605.4" cy="593.8" r="3.0"/>
<circle cx="607.3" cy="594.2" r="3.0"/>
<circle cx="608.5" cy="593.7" r="3.0"/>
<circle cx="611.7" cy="593.0" r="3.0"/>
<circle cx="612.9" cy="594.3" r="3.0"/>
<circle cx="616.1" cy="592.8" r="3.0"/>
<circle cx="616.5" cy="592.4" r="3.0"/>
<circle cx="618.3" cy="593.6" r="3.0"/>
<circle cx="621.5" cy="592.3" r="3.0"/>
<circle cx="623.0" cy="593.0" r="3.0"/>
<circle cx="624.0" cy="593.1" r="3.0"/>
<circle cx="627.6" cy="591.7" r="3.0"/>
<circle cx="629.2" cy="592.4" r="3.0"/>
<circle cx="630.4" cy="592.6" r="3.0"/>
<circle cx="632.1" cy="591.6" r="3.0"/>
<circle cx="634.2" cy="591.4" r="3.0"/>
<circle cx="637.1" cy="591.4" r="3.0"/>
<circle cx="638.6" cy="592.1" r="3.0"/>
<circle cx="639.8" cy="590.4" r="3.0"/>
<circle cx="642.5" cy="590.0" r="3.0"/>
<circle cx="645.1" cy="590.2" r="3.0"/>
<circle cx="646.0" cy="590.2" r="3.0"/>
<circle cx="648.7" cy="591.0" r="3.0"/>
<circle cx="650.0" cy="590.0" r="3.0"/>
</g>
<g fill="#f39232" stroke="#000" stroke-width="1.0">
<circle cx="320.4" cy="607.5" r="3.0"/>
<circle cx="321.6" cy="607.2" r="3.0"/>
<circle cx="323.3" cy="608.2" r="3.0"/>
<circle cx="326.5" cy="607.2" r="3.0"/>
<circle cx="327.4" cy="606.6" r="3.0"/>
<circle cx="330.0" cy="607.0" r="3.0"/>
<circle cx="331.9" cy="607.2" r="3.0"/>
<circle cx="334.1" cy="606.3" r="3.0"/>
<circle cx="335.5" cy="606.1" r="3.0"/>
<circle cx="336.3" cy="607.9" r="3.0"/>
<circle cx="340.1" cy="607.1" r="3.0"/>
<circle cx="341.8" cy="605.6" r="3.0"/>
<circle cx="342.2" cy="607.6" r="3.0"/>
<circle cx="345.3" cy="606.6" r="3.0"/>
<circle cx="346.4" cy="609.5" r="3.0"/>
<circle cx="349.1" cy="607.6" r="3.0"/>
<circle cx="350.6" cy="606.2" r="3.0"/>
<circle cx="352.7" cy="608.0" r="3.0"/>
<circle cx="354.2" cy="606.7" r="3.0"/>
<circle cx="356.0" cy="608.3" r="3.0"/>
<circle cx="357.3" cy="608.2" r="3.0"/>
<circle cx="360.4" cy="608.2" r="3.0"/>
<circle cx="361.4" cy="607.3" r="3.0"/>
<circle cx="364.0" cy="606.6" r="3.0"/>
<circle cx="365.6" cy="609.6" r="3.0"/>
<circle cx="368.4" cy="607.1" r="3.0"/>
<circle cx="370.1" cy="607.5" r="3.0"/>
<circle cx="371.7" cy="606.4" r="3.0"/>
<circle cx="373.4" cy="607.0" r="3.0"/>
<circle cx="375.5" cy="608.0" r="3.0"/>
<circle cx="377.5" cy="610.0" r="3.0"/>
<circle cx="380.1" cy="607.0" r="3.0"/>
<circle cx="380.3" cy="607.0" r="3.0"/>
<circle cx="382.3" cy="609.7" r="3.0"/>
<circle cx="385.3" cy="606.7" r="3.0"/>
<circle cx="386.4" cy="609.3" r="3.0"/>
<circle cx="389.6" cy="608.8" r="3.0"/>
<circle cx="391.2" cy="609.9" r="3.0"/>
<circle cx="392.7" cy="606.6" r="3.0"/>
<circle cx="394.8" cy="609.1" r="3.0"/>
<circle cx="397.6" cy="608.7" r="3.0"/>
<circle cx="399.2" cy="608.3" r="3.0"/>
<circle cx="399.9" cy="608.4" r="3.0"/>
<circle cx="402.4" cy="608.9" r="3.0"/>
<circle cx="403.9" cy="608.0" r="3.0"/>
<circle cx="406.2" cy="609.2" r="3.0"/>
<circle cx="407.2" cy="610.7" r="3.0"/>
<circle cx="409.0" cy="606.8" r="3.0"/>
<circle cx="411.9" cy="607.9" r="3.0"/>
<circle cx="413.5" cy="609.6" r="3.0"/>
<circle cx="417.3" cy="608.7" r="3.0"/>
<circle cx="419.1" cy="607.1" r="3.0"/>
<circle cx="420.9" cy="606.6" r="3.0"/>
<circle cx="422.8" cy="608.2" r="3.0"/>
<circle cx="425.0" cy="607.6" r="3.0"/>
<circle cx="484.7" cy="590.2" r="3.0"/>
<circle cx="486.9" cy="589.7" r="3.0"/>
<circle cx="488.2" cy="591.3" r="3.0"/>
<circle cx="490.3" cy="590.5" r="3.0"/>
<circle cx="490.9" cy="591.2" r="3.0"/>
<circle cx="493.6" cy="588.4" r="3.0"/>
<circle cx="494.8" cy="587.3" r="3.0"/>
<circle cx="498.7" cy="588.3" r="3.0"/>
<circle cx="499.3" cy="587.3" r="3.0"/>
<circle cx="501.8" cy="588.3" r="3.0"/>
<circle cx="502.9" cy="587.5" r="3.0"/>
<circle cx="505.5" cy="589.1" r="3.0"/>
<circle cx="507.6" cy="586.4" r="3.0"/>
<circle cx="508.8" cy="587.1" r="3.0"/>
<circle cx="510.5" cy="588.2" r="3.0"/>
<circle cx="512.4" cy="586.1" r="3.0"/>
<circle cx="515.2" cy="586.5" r="3.0"/>
<circle cx="517.5" cy="587.3" r="3.0"/>
<circle cx="519.7" cy="586.8" r="3.0"/>
<circle cx="520.3" cy="586.4" r="3.0"/>
<circle cx="522.4" cy="585.0" r="3.0"/>
<circle cx="524.2" cy="583.2" r="3.0"/>
<circle cx="527.8" cy="585.4" r="3.0"/>
<circle cx="529.0" cy="584.1" r="3.0"/>
<circle cx="425.0" cy="604.0" r="3.0"/>
<circle cx="432.0" cy="601.0" r="3.0"/>
<circle cx="446.0" cy="597.3" r="3.0"/>
<circle cx="463.7" cy="594.2" r="3.0"/>
<circle cx="474.2" cy="593.5" r="3.0"/>
<circle cx="427.0" cy="611.6" r="3.0"/>
<circle cx="432.3" cy="612.2" r="3.0"/>
<circle cx="421.0" cy="606.0" r="3.0"/>
<circle cx="423.0" cy="609.5" r="3.0"/>
<circle cx="418.0" cy="611.0" r="3.0"/>
</g>
<text x="682" y="704.7" font-size="11.5" fill="#111" textLength="88" lengthAdjust="spacingAndGlyphs">Hotelling's T2 95%</text>
<path d="M48.6 506h12.5M54 500.6l-5.4 5.4 5.4 5.4" fill="none" stroke="#000" stroke-width="2.7" stroke-linecap="round" stroke-linejoin="round"/>
<path d="M93.2 506h-12.5M87.8 500.6l5.4 5.4-5.4 5.4" fill="none" stroke="#000" stroke-width="2.7" stroke-linecap="round" stroke-linejoin="round"/>
<text x="108" y="512.6" font-size="16.5" fill="#000" textLength="71" lengthAdjust="spacingAndGlyphs">Score plot</text>
<path d="M707.5 500.2h10.6l4.6 5.7-4.6 5.7h-10.6a1.2 1.2 0 0 1-1.2-1.2v-9a1.2 1.2 0 0 1 1.2-1.2z" fill="#000"/>
<rect x="731.5" y="491.5" width="29" height="28.6" fill="#48545f" stroke="#3c4753" stroke-width="1"/>
<rect x="739" y="499" width="14" height="14" fill="none" stroke="#000" stroke-width="1.8" stroke-dasharray="3.2 1.6"/>
<circle cx="744.6" cy="505" r="3.4" fill="none" stroke="#000" stroke-width="1.6"/>
<path d="M747 507.5l3.3 3.3" stroke="#000" stroke-width="1.8"/>
<g fill="none" stroke="#000" stroke-width="1.6" stroke-linecap="round" stroke-linejoin="round">
<path d="M775.4 498.8L771.2 500.1L770.4 503.3M771.2 500.1L776.2 504.2"/>
<path d="M780.4 498.7L784 499.9L785.3 503.4M784 499.9L779.8 504.2"/>
<path d="M770.7 508.4L771.5 512L775.4 513.3M771.5 512L776.2 508.1"/>
<path d="M785.3 508.6L784.2 512L780.4 513.3M784.2 512L779.5 508.1"/>
</g>
<g fill="none" stroke="#000" stroke-width="1.5" stroke-linecap="round" stroke-linejoin="round">
<path d="M801.3 506h5.7M803.8 503.5l-2.5 2.5 2.5 2.5"/>
<path d="M818.7 506h-5.7M816.2 503.5l2.5 2.5-2.5 2.5"/>
<path d="M842 497.8v5M839.5 500.3l2.5-2.5 2.5 2.5"/>
<path d="M842 514v-5M839.5 511.5l2.5 2.5 2.5-2.5"/>
</g>
<path d="M866.6 501.3v12h12.2" fill="none" stroke="#000" stroke-width="1.5" stroke-linecap="round"/>
<rect x="869.4" y="497.9" width="12.6" height="12.6" rx="0.6" fill="#000"/>
<path d="M872 509.2l1.4-1.7 1 .6 1.8-2.3 2.1 2.6.9.8z" fill="#fff"/>
</svg>
</body></html>
